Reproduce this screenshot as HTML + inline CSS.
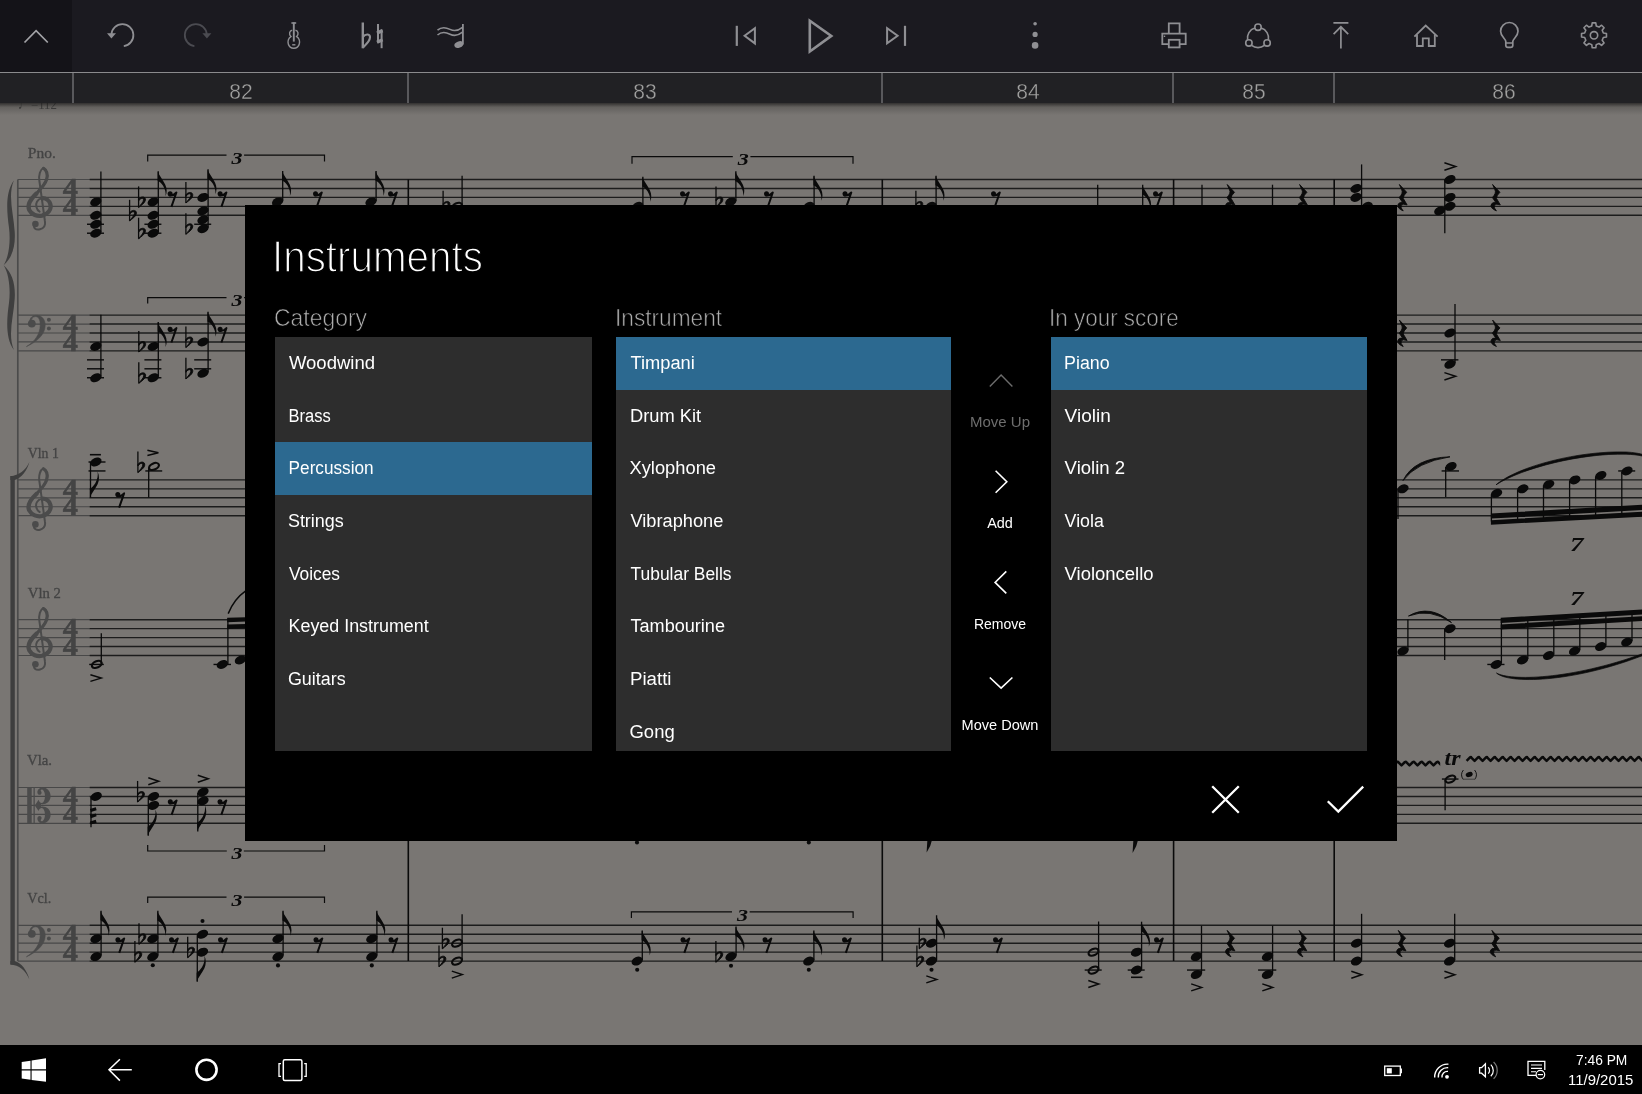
<!DOCTYPE html>
<html>
<head>
<meta charset="utf-8">
<title>Instruments</title>
<style>
html,body{margin:0;padding:0;background:#000;}
body{width:1642px;height:1094px;position:relative;overflow:hidden;font-family:"Liberation Sans",sans-serif;}
.abs{position:absolute;}
#paper{left:0;top:0;width:1642px;height:1046px;background:#797673;}
#toolbar{left:0;top:0;width:1642px;height:72px;background:#1b1a20;}
#tbleft{left:0;top:0;width:72px;height:72px;background:#141318;}
#ruler{left:0;top:72px;width:1642px;height:31px;background:#212124;}
#rulerline{left:0;top:72px;width:1642px;height:1px;background:#8b8b8d;}
#rulershadow{left:0;top:103px;width:1642px;height:12px;background:linear-gradient(rgba(30,29,28,.78),rgba(60,58,56,.35) 35%,rgba(121,118,115,0));}
.tick{position:absolute;top:73px;width:2px;height:30px;background:#59595c;}
.mnum{position:absolute;top:78.8px;width:60px;margin-left:-29.3px;text-align:center;color:#a0a0a2;font-size:22.6px;line-height:26px;transform:scaleX(.93);-webkit-text-stroke:0.35px #212124;}
#taskbar{left:0;top:1045.4px;width:1642px;height:48.6px;background:#000;}
#dialog{left:245px;top:205.3px;width:1152px;height:635.7px;background:#000;}
.list{position:absolute;top:337px;height:413.5px;background:#2d2d2d;overflow:hidden;}
.row{height:52.7px;line-height:52.7px;padding-left:14px;color:#fff;font-size:18px;white-space:nowrap;}
.row.sel{background:#2c6990;}
.row span,.lbl span,#title span,.t span{display:inline-block;transform-origin:0 50%;}
.lbl{position:absolute;color:#adadad;font-size:24px;line-height:30px;white-space:nowrap;-webkit-text-stroke:0.65px #000;}
#title{position:absolute;left:272px;top:228.5px;color:#fff;font-size:45px;line-height:56px;white-space:nowrap;-webkit-text-stroke:1.5px #000;}
#title span{transform:scaleX(0.897);}
.btnlbl{position:absolute;width:120px;margin-left:-60px;left:1000px;text-align:center;font-size:14px;line-height:18px;color:#fff;}
.row span,.lbl span,#title span,.t span,.btnlbl,.mnum,#score{filter:grayscale(1);}
</style>
</head>
<body>
<div id="paper" class="abs"></div>
<!-- SCORE -->
<svg id="score" class="abs" style="left:0;top:0" width="1642" height="1046" viewBox="0 0 1642 1046">
<path d="M17.8 179.5L90 179.5" stroke="#494846" stroke-width="1.2" fill="none" stroke-linecap="butt"/>
<path d="M89.7 179.5L1642 179.5" stroke="#1c1c1c" stroke-width="1.4" fill="none" stroke-linecap="butt"/>
<path d="M17.8 188.45L90 188.45" stroke="#494846" stroke-width="1.2" fill="none" stroke-linecap="butt"/>
<path d="M89.7 188.45L1642 188.45" stroke="#1c1c1c" stroke-width="1.4" fill="none" stroke-linecap="butt"/>
<path d="M17.8 197.4L90 197.4" stroke="#494846" stroke-width="1.2" fill="none" stroke-linecap="butt"/>
<path d="M89.7 197.4L1642 197.4" stroke="#1c1c1c" stroke-width="1.4" fill="none" stroke-linecap="butt"/>
<path d="M17.8 206.35L90 206.35" stroke="#494846" stroke-width="1.2" fill="none" stroke-linecap="butt"/>
<path d="M89.7 206.35L1642 206.35" stroke="#1c1c1c" stroke-width="1.4" fill="none" stroke-linecap="butt"/>
<path d="M17.8 215.3L90 215.3" stroke="#494846" stroke-width="1.2" fill="none" stroke-linecap="butt"/>
<path d="M89.7 215.3L1642 215.3" stroke="#1c1c1c" stroke-width="1.4" fill="none" stroke-linecap="butt"/>
<path d="M17.8 315.1L90 315.1" stroke="#494846" stroke-width="1.2" fill="none" stroke-linecap="butt"/>
<path d="M89.7 315.1L1642 315.1" stroke="#1c1c1c" stroke-width="1.4" fill="none" stroke-linecap="butt"/>
<path d="M17.8 324.05L90 324.05" stroke="#494846" stroke-width="1.2" fill="none" stroke-linecap="butt"/>
<path d="M89.7 324.05L1642 324.05" stroke="#1c1c1c" stroke-width="1.4" fill="none" stroke-linecap="butt"/>
<path d="M17.8 333L90 333" stroke="#494846" stroke-width="1.2" fill="none" stroke-linecap="butt"/>
<path d="M89.7 333L1642 333" stroke="#1c1c1c" stroke-width="1.4" fill="none" stroke-linecap="butt"/>
<path d="M17.8 341.95L90 341.95" stroke="#494846" stroke-width="1.2" fill="none" stroke-linecap="butt"/>
<path d="M89.7 341.95L1642 341.95" stroke="#1c1c1c" stroke-width="1.4" fill="none" stroke-linecap="butt"/>
<path d="M17.8 350.9L90 350.9" stroke="#494846" stroke-width="1.2" fill="none" stroke-linecap="butt"/>
<path d="M89.7 350.9L1642 350.9" stroke="#1c1c1c" stroke-width="1.4" fill="none" stroke-linecap="butt"/>
<path d="M17.8 479.9L90 479.9" stroke="#494846" stroke-width="1.2" fill="none" stroke-linecap="butt"/>
<path d="M89.7 479.9L1642 479.9" stroke="#1c1c1c" stroke-width="1.4" fill="none" stroke-linecap="butt"/>
<path d="M17.8 488.85L90 488.85" stroke="#494846" stroke-width="1.2" fill="none" stroke-linecap="butt"/>
<path d="M89.7 488.85L1642 488.85" stroke="#1c1c1c" stroke-width="1.4" fill="none" stroke-linecap="butt"/>
<path d="M17.8 497.8L90 497.8" stroke="#494846" stroke-width="1.2" fill="none" stroke-linecap="butt"/>
<path d="M89.7 497.8L1642 497.8" stroke="#1c1c1c" stroke-width="1.4" fill="none" stroke-linecap="butt"/>
<path d="M17.8 506.75L90 506.75" stroke="#494846" stroke-width="1.2" fill="none" stroke-linecap="butt"/>
<path d="M89.7 506.75L1642 506.75" stroke="#1c1c1c" stroke-width="1.4" fill="none" stroke-linecap="butt"/>
<path d="M17.8 515.7L90 515.7" stroke="#494846" stroke-width="1.2" fill="none" stroke-linecap="butt"/>
<path d="M89.7 515.7L1642 515.7" stroke="#1c1c1c" stroke-width="1.4" fill="none" stroke-linecap="butt"/>
<path d="M17.8 619.7L90 619.7" stroke="#494846" stroke-width="1.2" fill="none" stroke-linecap="butt"/>
<path d="M89.7 619.7L1642 619.7" stroke="#1c1c1c" stroke-width="1.4" fill="none" stroke-linecap="butt"/>
<path d="M17.8 628.65L90 628.65" stroke="#494846" stroke-width="1.2" fill="none" stroke-linecap="butt"/>
<path d="M89.7 628.65L1642 628.65" stroke="#1c1c1c" stroke-width="1.4" fill="none" stroke-linecap="butt"/>
<path d="M17.8 637.6L90 637.6" stroke="#494846" stroke-width="1.2" fill="none" stroke-linecap="butt"/>
<path d="M89.7 637.6L1642 637.6" stroke="#1c1c1c" stroke-width="1.4" fill="none" stroke-linecap="butt"/>
<path d="M17.8 646.55L90 646.55" stroke="#494846" stroke-width="1.2" fill="none" stroke-linecap="butt"/>
<path d="M89.7 646.55L1642 646.55" stroke="#1c1c1c" stroke-width="1.4" fill="none" stroke-linecap="butt"/>
<path d="M17.8 655.5L90 655.5" stroke="#494846" stroke-width="1.2" fill="none" stroke-linecap="butt"/>
<path d="M89.7 655.5L1642 655.5" stroke="#1c1c1c" stroke-width="1.4" fill="none" stroke-linecap="butt"/>
<path d="M17.8 787.5L90 787.5" stroke="#494846" stroke-width="1.2" fill="none" stroke-linecap="butt"/>
<path d="M89.7 787.5L1642 787.5" stroke="#1c1c1c" stroke-width="1.4" fill="none" stroke-linecap="butt"/>
<path d="M17.8 796.45L90 796.45" stroke="#494846" stroke-width="1.2" fill="none" stroke-linecap="butt"/>
<path d="M89.7 796.45L1642 796.45" stroke="#1c1c1c" stroke-width="1.4" fill="none" stroke-linecap="butt"/>
<path d="M17.8 805.4L90 805.4" stroke="#494846" stroke-width="1.2" fill="none" stroke-linecap="butt"/>
<path d="M89.7 805.4L1642 805.4" stroke="#1c1c1c" stroke-width="1.4" fill="none" stroke-linecap="butt"/>
<path d="M17.8 814.35L90 814.35" stroke="#494846" stroke-width="1.2" fill="none" stroke-linecap="butt"/>
<path d="M89.7 814.35L1642 814.35" stroke="#1c1c1c" stroke-width="1.4" fill="none" stroke-linecap="butt"/>
<path d="M17.8 823.3L90 823.3" stroke="#494846" stroke-width="1.2" fill="none" stroke-linecap="butt"/>
<path d="M89.7 823.3L1642 823.3" stroke="#1c1c1c" stroke-width="1.4" fill="none" stroke-linecap="butt"/>
<path d="M17.8 925.3L90 925.3" stroke="#494846" stroke-width="1.2" fill="none" stroke-linecap="butt"/>
<path d="M89.7 925.3L1642 925.3" stroke="#1c1c1c" stroke-width="1.4" fill="none" stroke-linecap="butt"/>
<path d="M17.8 934.25L90 934.25" stroke="#494846" stroke-width="1.2" fill="none" stroke-linecap="butt"/>
<path d="M89.7 934.25L1642 934.25" stroke="#1c1c1c" stroke-width="1.4" fill="none" stroke-linecap="butt"/>
<path d="M17.8 943.2L90 943.2" stroke="#494846" stroke-width="1.2" fill="none" stroke-linecap="butt"/>
<path d="M89.7 943.2L1642 943.2" stroke="#1c1c1c" stroke-width="1.4" fill="none" stroke-linecap="butt"/>
<path d="M17.8 952.15L90 952.15" stroke="#494846" stroke-width="1.2" fill="none" stroke-linecap="butt"/>
<path d="M89.7 952.15L1642 952.15" stroke="#1c1c1c" stroke-width="1.4" fill="none" stroke-linecap="butt"/>
<path d="M17.8 961.1L90 961.1" stroke="#494846" stroke-width="1.2" fill="none" stroke-linecap="butt"/>
<path d="M89.7 961.1L1642 961.1" stroke="#1c1c1c" stroke-width="1.4" fill="none" stroke-linecap="butt"/>
<path d="M17.8 179.5L17.8 961.1" stroke="#4c4b49" stroke-width="1.7" fill="none" stroke-linecap="butt"/>
<path d="M10.4 476 L14.8 476 L14.8 964.6 L10.4 964.6Z" fill="#3f3e3c"/>
<path d="M10.4 476.2 C19 475.4 25.5 470.6 29.4 462 C27 470.6 21.5 478 14.8 480 L10.4 480Z" fill="#3f3e3c"/>
<path d="M10.4 964.4 C19 965.2 25.5 970 29.4 979.4 C27 970.4 21.5 963 14.8 961 L10.4 961Z" fill="#3f3e3c"/>
<path d="M13.9 180.5 C5.5 191.7 6.5 209.7 9 227.7 C10.5 239.7 9.5 255.7 3.6 265.2 C12.5 257.7 15.6 245.7 14.7 231.7 C13.6 213.7 7.5 195.7 13.9 180.5Z M13.9 349.9 C5.5 338.7 6.5 320.7 9 302.7 C10.5 290.7 9.5 274.7 3.6 265.2 C12.5 272.7 15.6 284.7 14.7 298.7 C13.6 316.7 7.5 334.7 13.9 349.9Z" fill="#403f3d"/>
<text x="27.8" y="157.6" font-family="Liberation Serif, serif" font-size="15.5" fill="#454442" stroke="#454442" stroke-width="0.35" textLength="28" lengthAdjust="spacingAndGlyphs">Pno.</text>
<text x="27.8" y="457.8" font-family="Liberation Serif, serif" font-size="15.5" fill="#454442" stroke="#454442" stroke-width="0.35" textLength="31" lengthAdjust="spacingAndGlyphs">Vln 1</text>
<text x="27.8" y="597.6" font-family="Liberation Serif, serif" font-size="15.5" fill="#454442" stroke="#454442" stroke-width="0.35" textLength="33" lengthAdjust="spacingAndGlyphs">Vln 2</text>
<text x="27" y="765.3" font-family="Liberation Serif, serif" font-size="15.5" fill="#454442" stroke="#454442" stroke-width="0.35" textLength="25" lengthAdjust="spacingAndGlyphs">Vla.</text>
<text x="27.3" y="903.3" font-family="Liberation Serif, serif" font-size="15.5" fill="#454442" stroke="#454442" stroke-width="0.35" textLength="24" lengthAdjust="spacingAndGlyphs">Vcl.</text>
<text x="70.4" y="197.2" font-family="Liberation Serif, serif" font-weight="bold" font-size="26.5" fill="#454442" stroke="#454442" stroke-width="0.5" text-anchor="middle" transform="translate(70.4 0) scale(1.14 1) translate(-70.4 0)">4</text>
<text x="70.4" y="215.1" font-family="Liberation Serif, serif" font-weight="bold" font-size="26.5" fill="#454442" stroke="#454442" stroke-width="0.5" text-anchor="middle" transform="translate(70.4 0) scale(1.14 1) translate(-70.4 0)">4</text>
<text x="70.4" y="332.8" font-family="Liberation Serif, serif" font-weight="bold" font-size="26.5" fill="#454442" stroke="#454442" stroke-width="0.5" text-anchor="middle" transform="translate(70.4 0) scale(1.14 1) translate(-70.4 0)">4</text>
<text x="70.4" y="350.7" font-family="Liberation Serif, serif" font-weight="bold" font-size="26.5" fill="#454442" stroke="#454442" stroke-width="0.5" text-anchor="middle" transform="translate(70.4 0) scale(1.14 1) translate(-70.4 0)">4</text>
<text x="70.4" y="497.6" font-family="Liberation Serif, serif" font-weight="bold" font-size="26.5" fill="#454442" stroke="#454442" stroke-width="0.5" text-anchor="middle" transform="translate(70.4 0) scale(1.14 1) translate(-70.4 0)">4</text>
<text x="70.4" y="515.5" font-family="Liberation Serif, serif" font-weight="bold" font-size="26.5" fill="#454442" stroke="#454442" stroke-width="0.5" text-anchor="middle" transform="translate(70.4 0) scale(1.14 1) translate(-70.4 0)">4</text>
<text x="70.4" y="637.4" font-family="Liberation Serif, serif" font-weight="bold" font-size="26.5" fill="#454442" stroke="#454442" stroke-width="0.5" text-anchor="middle" transform="translate(70.4 0) scale(1.14 1) translate(-70.4 0)">4</text>
<text x="70.4" y="655.3" font-family="Liberation Serif, serif" font-weight="bold" font-size="26.5" fill="#454442" stroke="#454442" stroke-width="0.5" text-anchor="middle" transform="translate(70.4 0) scale(1.14 1) translate(-70.4 0)">4</text>
<text x="70.4" y="805.2" font-family="Liberation Serif, serif" font-weight="bold" font-size="26.5" fill="#454442" stroke="#454442" stroke-width="0.5" text-anchor="middle" transform="translate(70.4 0) scale(1.14 1) translate(-70.4 0)">4</text>
<text x="70.4" y="823.1" font-family="Liberation Serif, serif" font-weight="bold" font-size="26.5" fill="#454442" stroke="#454442" stroke-width="0.5" text-anchor="middle" transform="translate(70.4 0) scale(1.14 1) translate(-70.4 0)">4</text>
<text x="70.4" y="943" font-family="Liberation Serif, serif" font-weight="bold" font-size="26.5" fill="#454442" stroke="#454442" stroke-width="0.5" text-anchor="middle" transform="translate(70.4 0) scale(1.14 1) translate(-70.4 0)">4</text>
<text x="70.4" y="960.9" font-family="Liberation Serif, serif" font-weight="bold" font-size="26.5" fill="#454442" stroke="#454442" stroke-width="0.5" text-anchor="middle" transform="translate(70.4 0) scale(1.14 1) translate(-70.4 0)">4</text>
<g transform="translate(0 0)" fill="none" stroke="#4c4b49" stroke-linecap="round"><path d="M35.2 224.2 C32 227.6 36 230.4 40 229.3 C44.5 228 45.6 224.6 44.9 221 L39.4 181 C38.4 174.6 40.4 169.6 43.2 168 C46.2 169.4 48.4 174 46.6 179.6 C44.6 186 38 192 33.6 196.4 C29.4 200.6 27.2 205.4 29.4 210 C31.6 214.6 37.4 216.4 42 215.4 C48.4 214 51.4 209 50.2 204.6 C49 200 44.8 197.6 41.4 198.4 C37.4 199.4 35.2 203.4 36.4 207 C37 209.4 38.4 211 39.6 211.6" stroke-width="2"/><path d="M43.6 168.4 C46.2 169.8 48.4 174 46.6 179.6 C45.2 184 41.6 188 38.2 191.6" stroke-width="3.2"/><path d="M36.6 193.4 C31 198.6 26.8 204.6 29.2 210 C31.6 214.8 37.4 216.6 42 215.6 C48.6 214 51.6 209 50.4 204.4 C49.4 200.6 46 198.2 42.6 198.2" stroke-width="4.2"/><circle cx="35.4" cy="224" r="3.3" fill="#4c4b49" stroke="none"/></g>
<g transform="translate(0 0)"><path d="M31.5 324.2 C28.6 321.6 29.6 316.4 35.2 315.4 C41 314.6 45.4 319 45.2 325.6 C45 334.6 36.6 342 26.4 346.6 C35.6 341 40 333.6 40.2 325.4 C40.4 319.6 38.4 316.4 35.2 316.6 C32.6 316.8 31 319.2 31.5 321.4Z" fill="#4c4b49" stroke="#4c4b49" stroke-width="0.6"/><circle cx="31.8" cy="323.6" r="3.9" fill="#4c4b49"/><circle cx="48.9" cy="319.8" r="2" fill="#4c4b49"/><circle cx="48.9" cy="328.4" r="2" fill="#4c4b49"/></g>
<g transform="translate(0 300.4)" fill="none" stroke="#4c4b49" stroke-linecap="round"><path d="M35.2 224.2 C32 227.6 36 230.4 40 229.3 C44.5 228 45.6 224.6 44.9 221 L39.4 181 C38.4 174.6 40.4 169.6 43.2 168 C46.2 169.4 48.4 174 46.6 179.6 C44.6 186 38 192 33.6 196.4 C29.4 200.6 27.2 205.4 29.4 210 C31.6 214.6 37.4 216.4 42 215.4 C48.4 214 51.4 209 50.2 204.6 C49 200 44.8 197.6 41.4 198.4 C37.4 199.4 35.2 203.4 36.4 207 C37 209.4 38.4 211 39.6 211.6" stroke-width="2"/><path d="M43.6 168.4 C46.2 169.8 48.4 174 46.6 179.6 C45.2 184 41.6 188 38.2 191.6" stroke-width="3.2"/><path d="M36.6 193.4 C31 198.6 26.8 204.6 29.2 210 C31.6 214.8 37.4 216.6 42 215.6 C48.6 214 51.6 209 50.4 204.4 C49.4 200.6 46 198.2 42.6 198.2" stroke-width="4.2"/><circle cx="35.4" cy="224" r="3.3" fill="#4c4b49" stroke="none"/></g>
<g transform="translate(0 440.2)" fill="none" stroke="#4c4b49" stroke-linecap="round"><path d="M35.2 224.2 C32 227.6 36 230.4 40 229.3 C44.5 228 45.6 224.6 44.9 221 L39.4 181 C38.4 174.6 40.4 169.6 43.2 168 C46.2 169.4 48.4 174 46.6 179.6 C44.6 186 38 192 33.6 196.4 C29.4 200.6 27.2 205.4 29.4 210 C31.6 214.6 37.4 216.4 42 215.4 C48.4 214 51.4 209 50.2 204.6 C49 200 44.8 197.6 41.4 198.4 C37.4 199.4 35.2 203.4 36.4 207 C37 209.4 38.4 211 39.6 211.6" stroke-width="2"/><path d="M43.6 168.4 C46.2 169.8 48.4 174 46.6 179.6 C45.2 184 41.6 188 38.2 191.6" stroke-width="3.2"/><path d="M36.6 193.4 C31 198.6 26.8 204.6 29.2 210 C31.6 214.8 37.4 216.6 42 215.6 C48.6 214 51.6 209 50.4 204.4 C49.4 200.6 46 198.2 42.6 198.2" stroke-width="4.2"/><circle cx="35.4" cy="224" r="3.3" fill="#4c4b49" stroke="none"/></g>
<g fill="#4c4b49"><rect x="27.2" y="787.5" width="4.5" height="35.8"/><rect x="33.5" y="787.5" width="1.3" height="35.8"/><path d="M34.8 805.4 L38.6 799.8 C39.6 803.4 42 803.2 43 802.4 C45.6 800 45.8 792 42.6 789.8 C41.4 789 40.4 790 40.8 791 C42 791.8 42 794.8 39.6 794.8 C36.8 794.6 36.6 790.4 39.4 788.4 C43.6 785.8 50.6 789 50.6 796 C50.6 802.4 45 805 41 804 L41 806.8 C45 805.8 50.6 808.4 50.6 814.8 C50.6 821.8 43.6 825 39.4 822.4 C36.6 820.4 36.8 816.2 39.6 816 C42 816 42 819 40.8 819.8 C40.4 820.8 41.4 821.8 42.6 821 C45.8 818.8 45.6 810.8 43 808.4 C42 807.6 39.6 807.4 38.6 811Z"/></g>
<g transform="translate(0 610.2)"><path d="M31.5 324.2 C28.6 321.6 29.6 316.4 35.2 315.4 C41 314.6 45.4 319 45.2 325.6 C45 334.6 36.6 342 26.4 346.6 C35.6 341 40 333.6 40.2 325.4 C40.4 319.6 38.4 316.4 35.2 316.6 C32.6 316.8 31 319.2 31.5 321.4Z" fill="#4c4b49" stroke="#4c4b49" stroke-width="0.6"/><circle cx="31.8" cy="323.6" r="3.9" fill="#4c4b49"/><circle cx="48.9" cy="319.8" r="2" fill="#4c4b49"/><circle cx="48.9" cy="328.4" r="2" fill="#4c4b49"/></g>
<text x="18" y="108.6" font-family="Liberation Serif, serif" font-size="15.5" fill="#3c3b39" textLength="39" lengthAdjust="spacingAndGlyphs">&#9833;=112</text>
<path d="M408.3 179.5L408.3 350.9" stroke="#0a0a0a" stroke-width="1.6" fill="none" stroke-linecap="butt"/>
<path d="M408.3 479.9L408.3 961.1" stroke="#0a0a0a" stroke-width="1.6" fill="none" stroke-linecap="butt"/>
<path d="M882.3 179.5L882.3 350.9" stroke="#0a0a0a" stroke-width="1.6" fill="none" stroke-linecap="butt"/>
<path d="M882.3 479.9L882.3 961.1" stroke="#0a0a0a" stroke-width="1.6" fill="none" stroke-linecap="butt"/>
<path d="M1173.6 179.5L1173.6 350.9" stroke="#0a0a0a" stroke-width="1.6" fill="none" stroke-linecap="butt"/>
<path d="M1173.6 479.9L1173.6 961.1" stroke="#0a0a0a" stroke-width="1.6" fill="none" stroke-linecap="butt"/>
<path d="M1334.2 179.5L1334.2 350.9" stroke="#0a0a0a" stroke-width="1.6" fill="none" stroke-linecap="butt"/>
<path d="M1334.2 479.9L1334.2 961.1" stroke="#0a0a0a" stroke-width="1.6" fill="none" stroke-linecap="butt"/>
<path d="M87 224.25L104 224.25" stroke="#0a0a0a" stroke-width="1.4" fill="none" stroke-linecap="butt"/>
<path d="M87 233.2L104 233.2" stroke="#0a0a0a" stroke-width="1.4" fill="none" stroke-linecap="butt"/>
<path d="M100.9 232.2L100.9 171.5" stroke="#0a0a0a" stroke-width="1.3" fill="none" stroke-linecap="butt"/>
<ellipse cx="95.8" cy="201.88" rx="5.9" ry="4.15" transform="rotate(-24 95.8 201.88)" fill="#0a0a0a"/>
<ellipse cx="95.8" cy="215.3" rx="5.9" ry="4.15" transform="rotate(-24 95.8 215.3)" fill="#0a0a0a"/>
<ellipse cx="95.8" cy="224.25" rx="5.9" ry="4.15" transform="rotate(-24 95.8 224.25)" fill="#0a0a0a"/>
<ellipse cx="95.8" cy="233.2" rx="5.9" ry="4.15" transform="rotate(-24 95.8 233.2)" fill="#0a0a0a"/>
<path d="M144.4 224.25L161.4 224.25" stroke="#0a0a0a" stroke-width="1.4" fill="none" stroke-linecap="butt"/>
<path d="M144.4 233.2L161.4 233.2" stroke="#0a0a0a" stroke-width="1.4" fill="none" stroke-linecap="butt"/>
<path d="M158.3 232.2L158.3 171.2" stroke="#0a0a0a" stroke-width="1.3" fill="none" stroke-linecap="butt"/>
<ellipse cx="153.2" cy="201.88" rx="5.9" ry="4.15" transform="rotate(-24 153.2 201.88)" fill="#0a0a0a"/>
<ellipse cx="153.2" cy="215.3" rx="5.9" ry="4.15" transform="rotate(-24 153.2 215.3)" fill="#0a0a0a"/>
<ellipse cx="153.2" cy="224.25" rx="5.9" ry="4.15" transform="rotate(-24 153.2 224.25)" fill="#0a0a0a"/>
<ellipse cx="153.2" cy="233.2" rx="5.9" ry="4.15" transform="rotate(-24 153.2 233.2)" fill="#0a0a0a"/>
<path d="M157.65 171.2 C159.1 175.2 163.1 180.2 165.3 184.7 C167.1 188.7 167.2 192.7 165.5 196.2 C166 192.7 165.2 189.5 163.1 185.8 C161.5 183.2 159.3 181.5 157.65 180.8Z" fill="#0a0a0a"/>
<path d="M129.6 199.8L129.6 220.9" stroke="#0a0a0a" stroke-width="1.3" fill="none" stroke-linecap="butt"/>
<path d="M129.6 212.7 C132.2 209.1 137.2 209.9 136.4 213.7 C135.6 216.9 132.2 218.7 129.6 220.9 C131.6 217.9 134.4 215.7 134.5 213.3 C134.6 210.9 131.6 211.1 129.6 214.3Z" fill="#0a0a0a" stroke="#0a0a0a" stroke-width="0.9"/>
<path d="M138.6 186.38L138.6 207.47" stroke="#0a0a0a" stroke-width="1.3" fill="none" stroke-linecap="butt"/>
<path d="M138.6 199.28 C141.2 195.68 146.2 196.47 145.4 200.28 C144.6 203.47 141.2 205.28 138.6 207.47 C140.6 204.47 143.4 202.28 143.5 199.88 C143.6 197.47 140.6 197.68 138.6 200.88Z" fill="#0a0a0a" stroke="#0a0a0a" stroke-width="0.9"/>
<path d="M138.6 217.7L138.6 238.8" stroke="#0a0a0a" stroke-width="1.3" fill="none" stroke-linecap="butt"/>
<path d="M138.6 230.6 C141.2 227 146.2 227.8 145.4 231.6 C144.6 234.8 141.2 236.6 138.6 238.8 C140.6 235.8 143.4 233.6 143.5 231.2 C143.6 228.8 140.6 229 138.6 232.2Z" fill="#0a0a0a" stroke="#0a0a0a" stroke-width="0.9"/>
<circle cx="170.1" cy="193.7" r="2.5" fill="#0a0a0a"/>
<path d="M168.9 195.3 Q173.1 196.3 176.4 192.5 L171.4 206.9" stroke="#0a0a0a" stroke-width="2" fill="none" stroke-linejoin="round"/>
<path d="M194.2 224.25L211.2 224.25" stroke="#0a0a0a" stroke-width="1.4" fill="none" stroke-linecap="butt"/>
<path d="M208.1 227.72L208.1 169.2" stroke="#0a0a0a" stroke-width="1.3" fill="none" stroke-linecap="butt"/>
<ellipse cx="203" cy="197.4" rx="5.9" ry="4.15" transform="rotate(-24 203 197.4)" fill="#0a0a0a"/>
<ellipse cx="203" cy="210.82" rx="5.9" ry="4.15" transform="rotate(-24 203 210.82)" fill="#0a0a0a"/>
<ellipse cx="203" cy="219.78" rx="5.9" ry="4.15" transform="rotate(-24 203 219.78)" fill="#0a0a0a"/>
<ellipse cx="203" cy="228.72" rx="5.9" ry="4.15" transform="rotate(-24 203 228.72)" fill="#0a0a0a"/>
<path d="M207.45 169.2 C208.9 173.2 212.9 178.2 215.1 182.7 C216.9 186.7 217 190.7 215.3 194.2 C215.8 190.7 215 187.5 212.9 183.8 C211.3 181.2 209.1 179.5 207.45 178.8Z" fill="#0a0a0a"/>
<path d="M185.9 181.9L185.9 203" stroke="#0a0a0a" stroke-width="1.3" fill="none" stroke-linecap="butt"/>
<path d="M185.9 194.8 C188.5 191.2 193.5 192 192.7 195.8 C191.9 199 188.5 200.8 185.9 203 C187.9 200 190.7 197.8 190.8 195.4 C190.9 193 187.9 193.2 185.9 196.4Z" fill="#0a0a0a" stroke="#0a0a0a" stroke-width="0.9"/>
<path d="M185.9 213.22L185.9 234.32" stroke="#0a0a0a" stroke-width="1.3" fill="none" stroke-linecap="butt"/>
<path d="M185.9 226.12 C188.5 222.53 193.5 223.32 192.7 227.12 C191.9 230.32 188.5 232.12 185.9 234.32 C187.9 231.32 190.7 229.12 190.8 226.72 C190.9 224.32 187.9 224.53 185.9 227.72Z" fill="#0a0a0a" stroke="#0a0a0a" stroke-width="0.9"/>
<circle cx="220.1" cy="193.7" r="2.5" fill="#0a0a0a"/>
<path d="M218.9 195.3 Q223.1 196.3 226.4 192.5 L221.4 206.9" stroke="#0a0a0a" stroke-width="2" fill="none" stroke-linejoin="round"/>
<path d="M282.7 200.88L282.7 171" stroke="#0a0a0a" stroke-width="1.3" fill="none" stroke-linecap="butt"/>
<ellipse cx="277.6" cy="201.88" rx="5.9" ry="4.15" transform="rotate(-24 277.6 201.88)" fill="#0a0a0a"/>
<path d="M282.05 171 C283.5 175 287.5 180 289.7 184.5 C291.5 188.5 291.6 192.5 289.9 196 C290.4 192.5 289.6 189.3 287.5 185.6 C285.9 183 283.7 181.3 282.05 180.6Z" fill="#0a0a0a"/>
<circle cx="315.5" cy="193.7" r="2.5" fill="#0a0a0a"/>
<path d="M314.3 195.3 Q318.5 196.3 321.8 192.5 L316.8 206.9" stroke="#0a0a0a" stroke-width="2" fill="none" stroke-linejoin="round"/>
<path d="M376.1 200.88L376.1 171" stroke="#0a0a0a" stroke-width="1.3" fill="none" stroke-linecap="butt"/>
<ellipse cx="371" cy="201.88" rx="5.9" ry="4.15" transform="rotate(-24 371 201.88)" fill="#0a0a0a"/>
<path d="M375.45 171 C376.9 175 380.9 180 383.1 184.5 C384.9 188.5 385 192.5 383.3 196 C383.8 192.5 383 189.3 380.9 185.6 C379.3 183 377.1 181.3 375.45 180.6Z" fill="#0a0a0a"/>
<circle cx="390.5" cy="193.7" r="2.5" fill="#0a0a0a"/>
<path d="M389.3 195.3 Q393.5 196.3 396.8 192.5 L391.8 206.9" stroke="#0a0a0a" stroke-width="2" fill="none" stroke-linejoin="round"/>
<path d="M147.7 161.6L147.7 155.1L226.5 155.1M244.1 155.1L324.5 155.1L324.5 161.6" stroke="#0a0a0a" stroke-width="1.2" fill="none"/>
<text x="0" y="0" transform="translate(236.9 163.7) scale(1.3 1)" font-family="Liberation Serif, serif" font-weight="bold" font-style="italic" font-size="17" fill="#0a0a0a" text-anchor="middle">3</text>
<path d="M443.1 190.85L443.1 211.95" stroke="#0a0a0a" stroke-width="1.3" fill="none" stroke-linecap="butt"/>
<path d="M443.1 203.75 C445.7 200.15 450.7 200.95 449.9 204.75 C449.1 207.95 445.7 209.75 443.1 211.95 C445.1 208.95 447.9 206.75 448 204.35 C448.1 201.95 445.1 202.15 443.1 205.35Z" fill="#0a0a0a" stroke="#0a0a0a" stroke-width="0.9"/>
<path d="M462.1 205.35L462.1 175.7" stroke="#0a0a0a" stroke-width="1.3" fill="none" stroke-linecap="butt"/>
<ellipse cx="457" cy="206.35" rx="5.2" ry="3.1" transform="rotate(-24 457 206.35)" fill="none" stroke="#0a0a0a" stroke-width="2.2"/>
<path d="M632 163.7L632 156.7L732.8 156.7M750.4 156.7L853 156.7L853 163.7" stroke="#0a0a0a" stroke-width="1.2" fill="none"/>
<text x="0" y="0" transform="translate(743.2 165.3) scale(1.3 1)" font-family="Liberation Serif, serif" font-weight="bold" font-style="italic" font-size="17" fill="#0a0a0a" text-anchor="middle">3</text>
<path d="M642.9 205.35L642.9 176.8" stroke="#0a0a0a" stroke-width="1.3" fill="none" stroke-linecap="butt"/>
<ellipse cx="637.8" cy="206.35" rx="5.9" ry="4.15" transform="rotate(-24 637.8 206.35)" fill="#0a0a0a"/>
<path d="M642.25 176.8 C643.7 180.8 647.7 185.8 649.9 190.3 C651.7 194.3 651.8 198.3 650.1 201.8 C650.6 198.3 649.8 195.1 647.7 191.4 C646.1 188.8 643.9 187.1 642.25 186.4Z" fill="#0a0a0a"/>
<circle cx="682.5" cy="193.7" r="2.5" fill="#0a0a0a"/>
<path d="M681.3 195.3 Q685.5 196.3 688.8 192.5 L683.8 206.9" stroke="#0a0a0a" stroke-width="2" fill="none" stroke-linejoin="round"/>
<path d="M716 186.38L716 207.47" stroke="#0a0a0a" stroke-width="1.3" fill="none" stroke-linecap="butt"/>
<path d="M716 199.28 C718.6 195.68 723.6 196.47 722.8 200.28 C722 203.47 718.6 205.28 716 207.47 C718 204.47 720.8 202.28 720.9 199.88 C721 197.47 718 197.68 716 200.88Z" fill="#0a0a0a" stroke="#0a0a0a" stroke-width="0.9"/>
<path d="M735.9 200.88L735.9 171.3" stroke="#0a0a0a" stroke-width="1.3" fill="none" stroke-linecap="butt"/>
<ellipse cx="730.8" cy="201.88" rx="5.9" ry="4.15" transform="rotate(-24 730.8 201.88)" fill="#0a0a0a"/>
<path d="M735.25 171.3 C736.7 175.3 740.7 180.3 742.9 184.8 C744.7 188.8 744.8 192.8 743.1 196.3 C743.6 192.8 742.8 189.6 740.7 185.9 C739.1 183.3 736.9 181.6 735.25 180.9Z" fill="#0a0a0a"/>
<circle cx="766.5" cy="193.7" r="2.5" fill="#0a0a0a"/>
<path d="M765.3 195.3 Q769.5 196.3 772.8 192.5 L767.8 206.9" stroke="#0a0a0a" stroke-width="2" fill="none" stroke-linejoin="round"/>
<path d="M814.1 205.35L814.1 175.7" stroke="#0a0a0a" stroke-width="1.3" fill="none" stroke-linecap="butt"/>
<ellipse cx="809" cy="206.35" rx="5.9" ry="4.15" transform="rotate(-24 809 206.35)" fill="#0a0a0a"/>
<path d="M813.45 175.7 C814.9 179.7 818.9 184.7 821.1 189.2 C822.9 193.2 823 197.2 821.3 200.7 C821.8 197.2 821 194 818.9 190.3 C817.3 187.7 815.1 186 813.45 185.3Z" fill="#0a0a0a"/>
<circle cx="845" cy="193.7" r="2.5" fill="#0a0a0a"/>
<path d="M843.8 195.3 Q848 196.3 851.3 192.5 L846.3 206.9" stroke="#0a0a0a" stroke-width="2" fill="none" stroke-linejoin="round"/>
<path d="M915.9 190.85L915.9 211.95" stroke="#0a0a0a" stroke-width="1.3" fill="none" stroke-linecap="butt"/>
<path d="M915.9 203.75 C918.5 200.15 923.5 200.95 922.7 204.75 C921.9 207.95 918.5 209.75 915.9 211.95 C917.9 208.95 920.7 206.75 920.8 204.35 C920.9 201.95 917.9 202.15 915.9 205.35Z" fill="#0a0a0a" stroke="#0a0a0a" stroke-width="0.9"/>
<path d="M936.1 205.35L936.1 175.7" stroke="#0a0a0a" stroke-width="1.3" fill="none" stroke-linecap="butt"/>
<ellipse cx="931" cy="206.35" rx="5.9" ry="4.15" transform="rotate(-24 931 206.35)" fill="#0a0a0a"/>
<path d="M935.45 175.7 C936.9 179.7 940.9 184.7 943.1 189.2 C944.9 193.2 945 197.2 943.3 200.7 C943.8 197.2 943 194 940.9 190.3 C939.3 187.7 937.1 186 935.45 185.3Z" fill="#0a0a0a"/>
<circle cx="993.5" cy="193.7" r="2.5" fill="#0a0a0a"/>
<path d="M992.3 195.3 Q996.5 196.3 999.8 192.5 L994.8 206.9" stroke="#0a0a0a" stroke-width="2" fill="none" stroke-linejoin="round"/>
<path d="M1097.7 184.7L1097.7 216" stroke="#0a0a0a" stroke-width="1.3" fill="none" stroke-linecap="butt"/>
<path d="M1142.7 184.7L1142.7 216" stroke="#0a0a0a" stroke-width="1.3" fill="none" stroke-linecap="butt"/>
<path d="M1142.05 184.7 C1143.5 188.7 1147.5 193.7 1149.7 198.2 C1151.5 202.2 1151.6 206.2 1149.9 209.7 C1150.4 206.2 1149.6 203 1147.5 199.3 C1145.9 196.7 1143.7 195 1142.05 194.3Z" fill="#0a0a0a"/>
<circle cx="1155.5" cy="193.7" r="2.5" fill="#0a0a0a"/>
<path d="M1154.3 195.3 Q1158.5 196.3 1161.8 192.5 L1156.8 206.9" stroke="#0a0a0a" stroke-width="2" fill="none" stroke-linejoin="round"/>
<path d="M1202 184.7L1202 216" stroke="#0a0a0a" stroke-width="1.3" fill="none" stroke-linecap="butt"/>
<path d="M-3.4 -13.2 L3.9 -5.4 Q0.6 -2.4 0.4 0.6 L4.3 7.2 Q0 5.6 -1.6 7.6 Q-2.6 10 0.4 13.2 Q-5.6 10.6 -5 7.4 Q-4.2 4.2 -0.2 4.8 L-3.6 -0.2 Q0.8 -4.6 -1.2 -8.2Z" transform="translate(1230.6 197.7)" fill="#0a0a0a" stroke="#0a0a0a" stroke-width="0.9" stroke-linejoin="round"/>
<path d="M1272.5 184.7L1272.5 216" stroke="#0a0a0a" stroke-width="1.3" fill="none" stroke-linecap="butt"/>
<path d="M-3.4 -13.2 L3.9 -5.4 Q0.6 -2.4 0.4 0.6 L4.3 7.2 Q0 5.6 -1.6 7.6 Q-2.6 10 0.4 13.2 Q-5.6 10.6 -5 7.4 Q-4.2 4.2 -0.2 4.8 L-3.6 -0.2 Q0.8 -4.6 -1.2 -8.2Z" transform="translate(1303 197.7)" fill="#0a0a0a" stroke="#0a0a0a" stroke-width="0.9" stroke-linejoin="round"/>
<path d="M1361.6 164.4L1361.6 216" stroke="#0a0a0a" stroke-width="1.3" fill="none" stroke-linecap="butt"/>
<ellipse cx="1356" cy="188.45" rx="5.9" ry="4.15" transform="rotate(-24 1356 188.45)" fill="#0a0a0a"/>
<ellipse cx="1356" cy="197.4" rx="5.9" ry="4.15" transform="rotate(-24 1356 197.4)" fill="#0a0a0a"/>
<ellipse cx="1367.2" cy="206.35" rx="5.9" ry="4.15" transform="rotate(-24 1367.2 206.35)" fill="#0a0a0a"/>
<path d="M-3.4 -13.2 L3.9 -5.4 Q0.6 -2.4 0.4 0.6 L4.3 7.2 Q0 5.6 -1.6 7.6 Q-2.6 10 0.4 13.2 Q-5.6 10.6 -5 7.4 Q-4.2 4.2 -0.2 4.8 L-3.6 -0.2 Q0.8 -4.6 -1.2 -8.2Z" transform="translate(1402.8 197.7)" fill="#0a0a0a" stroke="#0a0a0a" stroke-width="0.9" stroke-linejoin="round"/>
<path d="M1444.8 179.5L1444.8 233.2" stroke="#0a0a0a" stroke-width="1.3" fill="none" stroke-linecap="butt"/>
<ellipse cx="1449.9" cy="179.5" rx="5.9" ry="4.15" transform="rotate(-24 1449.9 179.5)" fill="#0a0a0a"/>
<ellipse cx="1449.9" cy="197.4" rx="5.9" ry="4.15" transform="rotate(-24 1449.9 197.4)" fill="#0a0a0a"/>
<ellipse cx="1449.9" cy="206.35" rx="5.9" ry="4.15" transform="rotate(-24 1449.9 206.35)" fill="#0a0a0a"/>
<ellipse cx="1439.8" cy="210.82" rx="5.9" ry="4.15" transform="rotate(-24 1439.8 210.82)" fill="#0a0a0a"/>
<path d="M1444.4 162.8L1455.6 166.5L1444.4 170.2" stroke="#0a0a0a" stroke-width="1.5" fill="none"/>
<path d="M-3.4 -13.2 L3.9 -5.4 Q0.6 -2.4 0.4 0.6 L4.3 7.2 Q0 5.6 -1.6 7.6 Q-2.6 10 0.4 13.2 Q-5.6 10.6 -5 7.4 Q-4.2 4.2 -0.2 4.8 L-3.6 -0.2 Q0.8 -4.6 -1.2 -8.2Z" transform="translate(1496 197.7)" fill="#0a0a0a" stroke="#0a0a0a" stroke-width="0.9" stroke-linejoin="round"/>
<path d="M87 359.85L104 359.85" stroke="#0a0a0a" stroke-width="1.4" fill="none" stroke-linecap="butt"/>
<path d="M87 368.8L104 368.8" stroke="#0a0a0a" stroke-width="1.4" fill="none" stroke-linecap="butt"/>
<path d="M87 377.75L104 377.75" stroke="#0a0a0a" stroke-width="1.4" fill="none" stroke-linecap="butt"/>
<path d="M100.9 376.75L100.9 314.8" stroke="#0a0a0a" stroke-width="1.3" fill="none" stroke-linecap="butt"/>
<ellipse cx="95.8" cy="346.43" rx="5.9" ry="4.15" transform="rotate(-24 95.8 346.43)" fill="#0a0a0a"/>
<ellipse cx="95.8" cy="377.75" rx="5.9" ry="4.15" transform="rotate(-24 95.8 377.75)" fill="#0a0a0a"/>
<path d="M144.4 359.85L161.4 359.85" stroke="#0a0a0a" stroke-width="1.4" fill="none" stroke-linecap="butt"/>
<path d="M144.4 368.8L161.4 368.8" stroke="#0a0a0a" stroke-width="1.4" fill="none" stroke-linecap="butt"/>
<path d="M144.4 377.75L161.4 377.75" stroke="#0a0a0a" stroke-width="1.4" fill="none" stroke-linecap="butt"/>
<path d="M158.3 376.75L158.3 322" stroke="#0a0a0a" stroke-width="1.3" fill="none" stroke-linecap="butt"/>
<ellipse cx="153.2" cy="346.43" rx="5.9" ry="4.15" transform="rotate(-24 153.2 346.43)" fill="#0a0a0a"/>
<ellipse cx="153.2" cy="377.75" rx="5.9" ry="4.15" transform="rotate(-24 153.2 377.75)" fill="#0a0a0a"/>
<path d="M157.65 322 C159.1 326 163.1 331 165.3 335.5 C167.1 339.5 167.2 343.5 165.5 347 C166 343.5 165.2 340.3 163.1 336.6 C161.5 334 159.3 332.3 157.65 331.6Z" fill="#0a0a0a"/>
<path d="M138.8 330.93L138.8 352.03" stroke="#0a0a0a" stroke-width="1.3" fill="none" stroke-linecap="butt"/>
<path d="M138.8 343.82 C141.4 340.23 146.4 341.03 145.6 344.82 C144.8 348.03 141.4 349.82 138.8 352.03 C140.8 349.03 143.6 346.82 143.7 344.43 C143.8 342.03 140.8 342.23 138.8 345.43Z" fill="#0a0a0a" stroke="#0a0a0a" stroke-width="0.9"/>
<path d="M138.8 362.25L138.8 383.35" stroke="#0a0a0a" stroke-width="1.3" fill="none" stroke-linecap="butt"/>
<path d="M138.8 375.15 C141.4 371.55 146.4 372.35 145.6 376.15 C144.8 379.35 141.4 381.15 138.8 383.35 C140.8 380.35 143.6 378.15 143.7 375.75 C143.8 373.35 140.8 373.55 138.8 376.75Z" fill="#0a0a0a" stroke="#0a0a0a" stroke-width="0.9"/>
<circle cx="170.1" cy="329.3" r="2.5" fill="#0a0a0a"/>
<path d="M168.9 330.9 Q173.1 331.9 176.4 328.1 L171.4 342.5" stroke="#0a0a0a" stroke-width="2" fill="none" stroke-linejoin="round"/>
<path d="M194.2 359.85L211.2 359.85" stroke="#0a0a0a" stroke-width="1.4" fill="none" stroke-linecap="butt"/>
<path d="M194.2 368.8L211.2 368.8" stroke="#0a0a0a" stroke-width="1.4" fill="none" stroke-linecap="butt"/>
<path d="M208.1 372.28L208.1 311.8" stroke="#0a0a0a" stroke-width="1.3" fill="none" stroke-linecap="butt"/>
<ellipse cx="203" cy="341.95" rx="5.9" ry="4.15" transform="rotate(-24 203 341.95)" fill="#0a0a0a"/>
<ellipse cx="203" cy="373.28" rx="5.9" ry="4.15" transform="rotate(-24 203 373.28)" fill="#0a0a0a"/>
<path d="M207.45 311.8 C208.9 315.8 212.9 320.8 215.1 325.3 C216.9 329.3 217 333.3 215.3 336.8 C215.8 333.3 215 330.1 212.9 326.4 C211.3 323.8 209.1 322.1 207.45 321.4Z" fill="#0a0a0a"/>
<path d="M185.9 326.45L185.9 347.55" stroke="#0a0a0a" stroke-width="1.3" fill="none" stroke-linecap="butt"/>
<path d="M185.9 339.35 C188.5 335.75 193.5 336.55 192.7 340.35 C191.9 343.55 188.5 345.35 185.9 347.55 C187.9 344.55 190.7 342.35 190.8 339.95 C190.9 337.55 187.9 337.75 185.9 340.95Z" fill="#0a0a0a" stroke="#0a0a0a" stroke-width="0.9"/>
<path d="M185.9 357.78L185.9 378.88" stroke="#0a0a0a" stroke-width="1.3" fill="none" stroke-linecap="butt"/>
<path d="M185.9 370.68 C188.5 367.08 193.5 367.88 192.7 371.68 C191.9 374.88 188.5 376.68 185.9 378.88 C187.9 375.88 190.7 373.68 190.8 371.28 C190.9 368.88 187.9 369.08 185.9 372.28Z" fill="#0a0a0a" stroke="#0a0a0a" stroke-width="0.9"/>
<circle cx="220.1" cy="329.3" r="2.5" fill="#0a0a0a"/>
<path d="M218.9 330.9 Q223.1 331.9 226.4 328.1 L221.4 342.5" stroke="#0a0a0a" stroke-width="2" fill="none" stroke-linejoin="round"/>
<path d="M147.7 303.6L147.7 297.6L226.5 297.6M244.1 297.6L324.5 297.6L324.5 303.6" stroke="#0a0a0a" stroke-width="1.2" fill="none"/>
<text x="0" y="0" transform="translate(236.9 306.2) scale(1.3 1)" font-family="Liberation Serif, serif" font-weight="bold" font-style="italic" font-size="17" fill="#0a0a0a" text-anchor="middle">3</text>
<path d="M-3.4 -13.2 L3.9 -5.4 Q0.6 -2.4 0.4 0.6 L4.3 7.2 Q0 5.6 -1.6 7.6 Q-2.6 10 0.4 13.2 Q-5.6 10.6 -5 7.4 Q-4.2 4.2 -0.2 4.8 L-3.6 -0.2 Q0.8 -4.6 -1.2 -8.2Z" transform="translate(1402.8 333.3)" fill="#0a0a0a" stroke="#0a0a0a" stroke-width="0.9" stroke-linejoin="round"/>
<path d="M1441 359.85L1458.4 359.85" stroke="#0a0a0a" stroke-width="1.4" fill="none" stroke-linecap="butt"/>
<path d="M1455 304L1455 363" stroke="#0a0a0a" stroke-width="1.3" fill="none" stroke-linecap="butt"/>
<ellipse cx="1450" cy="333" rx="5.9" ry="4.15" transform="rotate(-24 1450 333)" fill="#0a0a0a"/>
<ellipse cx="1450" cy="364.33" rx="5.9" ry="4.15" transform="rotate(-24 1450 364.33)" fill="#0a0a0a"/>
<path d="M1444.4 372.6L1455.6 376.3L1444.4 380" stroke="#0a0a0a" stroke-width="1.5" fill="none"/>
<path d="M-3.4 -13.2 L3.9 -5.4 Q0.6 -2.4 0.4 0.6 L4.3 7.2 Q0 5.6 -1.6 7.6 Q-2.6 10 0.4 13.2 Q-5.6 10.6 -5 7.4 Q-4.2 4.2 -0.2 4.8 L-3.6 -0.2 Q0.8 -4.6 -1.2 -8.2Z" transform="translate(1496 333.3)" fill="#0a0a0a" stroke="#0a0a0a" stroke-width="0.9" stroke-linejoin="round"/>
<path d="M88.5 470.95L105.5 470.95" stroke="#0a0a0a" stroke-width="1.4" fill="none" stroke-linecap="butt"/>
<path d="M88.5 462L105.5 462" stroke="#0a0a0a" stroke-width="1.4" fill="none" stroke-linecap="butt"/>
<path d="M89.9 454.7L100.9 454.7" stroke="#0a0a0a" stroke-width="1.6" fill="none" stroke-linecap="butt"/>
<path d="M90.5 462L90.5 497.5" stroke="#0a0a0a" stroke-width="1.3" fill="none" stroke-linecap="butt"/>
<ellipse cx="95.9" cy="462" rx="5.9" ry="4.15" transform="rotate(-24 95.9 462)" fill="#0a0a0a"/>
<path d="M89.85 497.8 C91.3 493.8 95.3 488.8 97.6 484.3 C99.4 480.3 99.5 475.8 97.6 471.5 C98.2 475.8 97.4 479.3 95.3 483.2 C93.7 485.8 91.5 487.8 89.85 488.8Z" fill="#0a0a0a"/>
<circle cx="117.8" cy="494.5" r="2.5" fill="#0a0a0a"/>
<path d="M116.6 496.1 Q120.8 497.1 124.1 493.3 L119.1 507.7" stroke="#0a0a0a" stroke-width="2" fill="none" stroke-linejoin="round"/>
<path d="M137.9 451.5L137.9 472.6" stroke="#0a0a0a" stroke-width="1.3" fill="none" stroke-linecap="butt"/>
<path d="M137.9 464.4 C140.5 460.8 145.5 461.6 144.7 465.4 C143.9 468.6 140.5 470.4 137.9 472.6 C139.9 469.6 142.7 467.4 142.8 465 C142.9 462.6 139.9 462.8 137.9 466Z" fill="#0a0a0a" stroke="#0a0a0a" stroke-width="0.9"/>
<path d="M145.3 470.95L162.2 470.95" stroke="#0a0a0a" stroke-width="1.4" fill="none" stroke-linecap="butt"/>
<path d="M148.7 468L148.7 497.5" stroke="#0a0a0a" stroke-width="1.3" fill="none" stroke-linecap="butt"/>
<ellipse cx="154" cy="466.47" rx="5.2" ry="3.1" transform="rotate(-24 154 466.47)" fill="none" stroke="#0a0a0a" stroke-width="2.2"/>
<path d="M147.4 450.2L158.4 452.8L147.4 455.4" stroke="#0a0a0a" stroke-width="1.5" fill="none"/>
<path d="M1398 489L1398 519" stroke="#0a0a0a" stroke-width="1.3" fill="none" stroke-linecap="butt"/>
<ellipse cx="1403" cy="488.85" rx="5.9" ry="4.15" transform="rotate(-24 1403 488.85)" fill="#0a0a0a"/>
<path d="M1403 480.6 Q1414 458 1450 456.8 Q1416.5 462 1403 480.6Z" fill="#0a0a0a" stroke="#0a0a0a" stroke-width="0.9"/>
<path d="M1441.6 470.95L1459 470.95" stroke="#0a0a0a" stroke-width="1.4" fill="none" stroke-linecap="butt"/>
<path d="M1445.7 467L1445.7 497" stroke="#0a0a0a" stroke-width="1.3" fill="none" stroke-linecap="butt"/>
<ellipse cx="1451" cy="466.47" rx="5.9" ry="4.15" transform="rotate(-24 1451 466.47)" fill="#0a0a0a"/>
<path d="M1491.4 494.32L1491.4 521.49" stroke="#0a0a0a" stroke-width="1.3" fill="none" stroke-linecap="butt"/>
<ellipse cx="1496.6" cy="493.32" rx="5.9" ry="4.15" transform="rotate(-24 1496.6 493.32)" fill="#0a0a0a"/>
<path d="M1517.6 489.85L1517.6 519.96" stroke="#0a0a0a" stroke-width="1.3" fill="none" stroke-linecap="butt"/>
<ellipse cx="1522.8" cy="488.85" rx="5.9" ry="4.15" transform="rotate(-24 1522.8 488.85)" fill="#0a0a0a"/>
<path d="M1543.5 485.38L1543.5 518.45" stroke="#0a0a0a" stroke-width="1.3" fill="none" stroke-linecap="butt"/>
<ellipse cx="1548.7" cy="484.38" rx="5.9" ry="4.15" transform="rotate(-24 1548.7 484.38)" fill="#0a0a0a"/>
<path d="M1569.6 480.9L1569.6 516.93" stroke="#0a0a0a" stroke-width="1.3" fill="none" stroke-linecap="butt"/>
<ellipse cx="1574.8" cy="479.9" rx="5.9" ry="4.15" transform="rotate(-24 1574.8 479.9)" fill="#0a0a0a"/>
<path d="M1595.6 476.42L1595.6 515.41" stroke="#0a0a0a" stroke-width="1.3" fill="none" stroke-linecap="butt"/>
<ellipse cx="1600.8" cy="475.42" rx="5.9" ry="4.15" transform="rotate(-24 1600.8 475.42)" fill="#0a0a0a"/>
<path d="M1621.8 471.95L1621.8 513.88" stroke="#0a0a0a" stroke-width="1.3" fill="none" stroke-linecap="butt"/>
<path d="M1618.2 470.95L1635.2 470.95" stroke="#0a0a0a" stroke-width="1.4" fill="none" stroke-linecap="butt"/>
<ellipse cx="1627" cy="470.95" rx="5.9" ry="4.15" transform="rotate(-24 1627 470.95)" fill="#0a0a0a"/>
<path d="M1490.9 513.5 L1642 504.7 L1642 510.1 L1490.9 518.6Z M1490.9 520.2 L1642 511.8 L1642 516.8 L1490.9 524.7Z" fill="#0a0a0a"/>
<path d="M1496 484.8 C1518 466 1580 450.5 1626 452 C1634 452.4 1640 453.6 1643 454.6 L1643 456.2 C1638 455 1632 454.4 1626 454.2 C1582 453 1522 468 1496 484.8Z" fill="#0a0a0a" stroke="#0a0a0a" stroke-width="0.7"/>
<text x="0" y="0" transform="translate(1576.8 551.3) scale(1.5 1)" font-family="Liberation Serif, serif" font-weight="bold" font-style="italic" font-size="18" fill="#0a0a0a" text-anchor="middle">7</text>
<path d="M89.2 664.45L103.8 664.45" stroke="#0a0a0a" stroke-width="1.4" fill="none" stroke-linecap="butt"/>
<path d="M101.3 664L101.3 633.2" stroke="#0a0a0a" stroke-width="1.3" fill="none" stroke-linecap="butt"/>
<ellipse cx="96.8" cy="664.45" rx="5.2" ry="3.1" transform="rotate(-24 96.8 664.45)" fill="none" stroke="#0a0a0a" stroke-width="2.2"/>
<path d="M90.4 674.8L101.2 678.1L90.4 681.4" stroke="#0a0a0a" stroke-width="1.5" fill="none"/>
<path d="M213.5 664.45L231 664.45" stroke="#0a0a0a" stroke-width="1.4" fill="none" stroke-linecap="butt"/>
<path d="M227.9 664L227.9 618.5" stroke="#0a0a0a" stroke-width="1.3" fill="none" stroke-linecap="butt"/>
<ellipse cx="222.3" cy="664.45" rx="5.9" ry="4.15" transform="rotate(-24 222.3 664.45)" fill="#0a0a0a"/>
<ellipse cx="240.4" cy="659.98" rx="5.9" ry="4.15" transform="rotate(-24 240.4 659.98)" fill="#0a0a0a"/>
<path d="M227.2 617.8 L246 617.2 L246 621.6 L227.2 622.2Z M227.2 624.5 L246 623.9 L246 628.3 L227.2 628.9Z" fill="#0a0a0a"/>
<path d="M228.2 613.6 Q234 599 246 590.6" stroke="#0a0a0a" stroke-width="1.5" fill="none"/>
<path d="M1407.9 650L1407.9 619.6" stroke="#0a0a0a" stroke-width="1.3" fill="none" stroke-linecap="butt"/>
<ellipse cx="1403" cy="651.03" rx="5.9" ry="4.15" transform="rotate(-24 1403 651.03)" fill="#0a0a0a"/>
<path d="M1408.5 616 Q1430 603.6 1451.5 622.6 Q1430 607.6 1408.5 616Z" fill="#0a0a0a" stroke="#0a0a0a" stroke-width="0.9"/>
<path d="M1444.7 629L1444.7 660" stroke="#0a0a0a" stroke-width="1.3" fill="none" stroke-linecap="butt"/>
<ellipse cx="1450" cy="628.65" rx="5.9" ry="4.15" transform="rotate(-24 1450 628.65)" fill="#0a0a0a"/>
<path d="M1487.3 664.45L1504.5 664.45" stroke="#0a0a0a" stroke-width="1.4" fill="none" stroke-linecap="butt"/>
<path d="M1501.4 663.45L1501.4 618.78" stroke="#0a0a0a" stroke-width="1.3" fill="none" stroke-linecap="butt"/>
<ellipse cx="1496.2" cy="664.45" rx="5.9" ry="4.15" transform="rotate(-24 1496.2 664.45)" fill="#0a0a0a"/>
<path d="M1527.8 658.98L1527.8 617.2" stroke="#0a0a0a" stroke-width="1.3" fill="none" stroke-linecap="butt"/>
<ellipse cx="1522.6" cy="659.98" rx="5.9" ry="4.15" transform="rotate(-24 1522.6 659.98)" fill="#0a0a0a"/>
<path d="M1553.8 654.5L1553.8 615.65" stroke="#0a0a0a" stroke-width="1.3" fill="none" stroke-linecap="butt"/>
<ellipse cx="1548.6" cy="655.5" rx="5.9" ry="4.15" transform="rotate(-24 1548.6 655.5)" fill="#0a0a0a"/>
<path d="M1579.8 650.03L1579.8 614.11" stroke="#0a0a0a" stroke-width="1.3" fill="none" stroke-linecap="butt"/>
<ellipse cx="1574.6" cy="651.03" rx="5.9" ry="4.15" transform="rotate(-24 1574.6 651.03)" fill="#0a0a0a"/>
<path d="M1605.9 645.55L1605.9 612.55" stroke="#0a0a0a" stroke-width="1.3" fill="none" stroke-linecap="butt"/>
<ellipse cx="1600.7" cy="646.55" rx="5.9" ry="4.15" transform="rotate(-24 1600.7 646.55)" fill="#0a0a0a"/>
<path d="M1632 641.08L1632 611" stroke="#0a0a0a" stroke-width="1.3" fill="none" stroke-linecap="butt"/>
<ellipse cx="1626.8" cy="642.08" rx="5.9" ry="4.15" transform="rotate(-24 1626.8 642.08)" fill="#0a0a0a"/>
<path d="M1500.7 617.8 L1642 609.4 L1642 614.6 L1500.7 622.9Z M1500.7 624.4 L1642 616.2 L1642 621.1 L1500.7 629.4Z" fill="#0a0a0a"/>
<path d="M1496.5 673 C1510 681 1570 680 1643 653.6 L1643 655.4 C1572 683 1508 684 1496.5 673Z" fill="#0a0a0a" stroke="#0a0a0a" stroke-width="0.7"/>
<text x="0" y="0" transform="translate(1576.8 604.7) scale(1.5 1)" font-family="Liberation Serif, serif" font-weight="bold" font-style="italic" font-size="18" fill="#0a0a0a" text-anchor="middle">7</text>
<path d="M91 797L91 827.2" stroke="#0a0a0a" stroke-width="1.3" fill="none" stroke-linecap="butt"/>
<ellipse cx="96.2" cy="796.45" rx="5.9" ry="4.15" transform="rotate(-24 96.2 796.45)" fill="#0a0a0a"/>
<path d="M90.4 810.5L96.2 808.7" stroke="#0a0a0a" stroke-width="3" fill="none"/>
<path d="M90.4 816.7L96.2 814.9" stroke="#0a0a0a" stroke-width="3" fill="none"/>
<path d="M90.4 823L96.2 821.2" stroke="#0a0a0a" stroke-width="3" fill="none"/>
<path d="M137.6 780.95L137.6 802.05" stroke="#0a0a0a" stroke-width="1.3" fill="none" stroke-linecap="butt"/>
<path d="M137.6 793.85 C140.2 790.25 145.2 791.05 144.4 794.85 C143.6 798.05 140.2 799.85 137.6 802.05 C139.6 799.05 142.4 796.85 142.5 794.45 C142.6 792.05 139.6 792.25 137.6 795.45Z" fill="#0a0a0a" stroke="#0a0a0a" stroke-width="0.9"/>
<path d="M148.3 797.45L148.3 835.7" stroke="#0a0a0a" stroke-width="1.3" fill="none" stroke-linecap="butt"/>
<ellipse cx="153.5" cy="796.45" rx="5.9" ry="4.15" transform="rotate(-24 153.5 796.45)" fill="#0a0a0a"/>
<ellipse cx="153.5" cy="805.4" rx="5.9" ry="4.15" transform="rotate(-24 153.5 805.4)" fill="#0a0a0a"/>
<path d="M147.65 835.7 C149.1 831.7 153.1 826.7 155.4 822.2 C157.2 818.2 157.3 813.7 155.4 809.4 C156 813.7 155.2 817.2 153.1 821.1 C151.5 823.7 149.3 825.7 147.65 826.7Z" fill="#0a0a0a"/>
<path d="M148.3 777.7L158.7 781.2L148.3 784.7" stroke="#0a0a0a" stroke-width="1.5" fill="none"/>
<circle cx="170.3" cy="801.7" r="2.5" fill="#0a0a0a"/>
<path d="M169.1 803.3 Q173.3 804.3 176.6 800.5 L171.6 814.9" stroke="#0a0a0a" stroke-width="2" fill="none" stroke-linejoin="round"/>
<path d="M197.8 792.98L197.8 831.6" stroke="#0a0a0a" stroke-width="1.3" fill="none" stroke-linecap="butt"/>
<ellipse cx="203" cy="791.98" rx="5.9" ry="4.15" transform="rotate(-24 203 791.98)" fill="#0a0a0a"/>
<ellipse cx="203" cy="800.92" rx="5.9" ry="4.15" transform="rotate(-24 203 800.92)" fill="#0a0a0a"/>
<path d="M197.15 831.6 C198.6 827.6 202.6 822.6 204.9 818.1 C206.7 814.1 206.8 809.6 204.9 805.3 C205.5 809.6 204.7 813.1 202.6 817 C201 819.6 198.8 821.6 197.15 822.6Z" fill="#0a0a0a"/>
<path d="M197.8 775.3L208.2 778.8L197.8 782.3" stroke="#0a0a0a" stroke-width="1.5" fill="none"/>
<circle cx="220" cy="801.7" r="2.5" fill="#0a0a0a"/>
<path d="M218.8 803.3 Q223 804.3 226.3 800.5 L221.3 814.9" stroke="#0a0a0a" stroke-width="2" fill="none" stroke-linejoin="round"/>
<path d="M147.7 845 L147.7 851 L226.8 851 M243.8 851 L324.5 851 L324.5 845" stroke="#0a0a0a" stroke-width="1.2" fill="none"/>
<text x="0" y="0" transform="translate(236.9 859.4) scale(1.3 1)" font-family="Liberation Serif, serif" font-weight="bold" font-style="italic" font-size="17" fill="#0a0a0a" text-anchor="middle">3</text>
<circle cx="637" cy="842.4" r="2.05" fill="#0a0a0a"/>
<circle cx="808.8" cy="842.4" r="2.05" fill="#0a0a0a"/>
<path d="M926.6 852.6 L927.4 840 L932 840 Q931 846 926.6 852.6Z" fill="#0a0a0a"/>
<path d="M1132.6 853 L1133.4 840 L1138 840 Q1137 846.4 1132.6 853Z" fill="#0a0a0a"/>
<clipPath id="wc"><rect x="1397" y="750" width="43.2" height="30"/></clipPath>
<g clip-path="url(#wc)">
<path d="M1393.5 765.4 l3.4 -3.4 q1 -0.6 1.6 0.4 l3 3 l3.4 -3.4 q1 -0.6 1.6 0.4 l3 3 l3.4 -3.4 q1 -0.6 1.6 0.4 l3 3 l3.4 -3.4 q1 -0.6 1.6 0.4 l3 3 l3.4 -3.4 q1 -0.6 1.6 0.4 l3 3 l3.4 -3.4 q1 -0.6 1.6 0.4 l3 3" stroke="#0a0a0a" stroke-width="2.5" fill="none" stroke-linejoin="round"/>
</g>
<path d="M1466.6 760.8 l3.4 -3.4 q1 -0.6 1.6 0.4 l3 3 l3.4 -3.4 q1 -0.6 1.6 0.4 l3 3 l3.4 -3.4 q1 -0.6 1.6 0.4 l3 3 l3.4 -3.4 q1 -0.6 1.6 0.4 l3 3 l3.4 -3.4 q1 -0.6 1.6 0.4 l3 3 l3.4 -3.4 q1 -0.6 1.6 0.4 l3 3 l3.4 -3.4 q1 -0.6 1.6 0.4 l3 3 l3.4 -3.4 q1 -0.6 1.6 0.4 l3 3 l3.4 -3.4 q1 -0.6 1.6 0.4 l3 3 l3.4 -3.4 q1 -0.6 1.6 0.4 l3 3 l3.4 -3.4 q1 -0.6 1.6 0.4 l3 3 l3.4 -3.4 q1 -0.6 1.6 0.4 l3 3 l3.4 -3.4 q1 -0.6 1.6 0.4 l3 3 l3.4 -3.4 q1 -0.6 1.6 0.4 l3 3 l3.4 -3.4 q1 -0.6 1.6 0.4 l3 3 l3.4 -3.4 q1 -0.6 1.6 0.4 l3 3 l3.4 -3.4 q1 -0.6 1.6 0.4 l3 3 l3.4 -3.4 q1 -0.6 1.6 0.4 l3 3 l3.4 -3.4 q1 -0.6 1.6 0.4 l3 3 l3.4 -3.4 q1 -0.6 1.6 0.4 l3 3 l3.4 -3.4 q1 -0.6 1.6 0.4 l3 3 l3.4 -3.4 q1 -0.6 1.6 0.4 l3 3 l3.4 -3.4 q1 -0.6 1.6 0.4 l3 3" stroke="#0a0a0a" stroke-width="2.5" fill="none" stroke-linejoin="round"/>
<text x="0" y="0" transform="translate(1444.6 765.4) scale(1.2 1)" font-family="Liberation Serif, serif" font-weight="bold" font-style="italic" font-size="20" fill="#0a0a0a">tr</text>
<path d="M1441.9 779.05L1458.5 779.05" stroke="#0a0a0a" stroke-width="1.4" fill="none" stroke-linecap="butt"/>
<path d="M1445.1 780L1445.1 810.2" stroke="#0a0a0a" stroke-width="1.3" fill="none" stroke-linecap="butt"/>
<ellipse cx="1450.4" cy="779.05" rx="5.2" ry="3.1" transform="rotate(-24 1450.4 779.05)" fill="none" stroke="#0a0a0a" stroke-width="2.2"/>
<path d="M1463.4 770 Q1459.6 774.8 1463.4 779.6 M1474.6 770 Q1478.4 774.8 1474.6 779.6" stroke="#0a0a0a" stroke-width="0.9" fill="none"/>
<path d="M1463.8 779.2 L1474 779.2" stroke="#3a3a3a" stroke-width="0.9" fill="none"/>
<ellipse cx="1469.2" cy="774.5" rx="3.6" ry="2.5" transform="rotate(-22 1469.2 774.5)" fill="#0a0a0a"/>
<path d="M101.1 955.62L101.1 910.7" stroke="#0a0a0a" stroke-width="1.3" fill="none" stroke-linecap="butt"/>
<ellipse cx="96" cy="938.72" rx="5.9" ry="4.15" transform="rotate(-24 96 938.72)" fill="#0a0a0a"/>
<ellipse cx="96" cy="956.62" rx="5.9" ry="4.15" transform="rotate(-24 96 956.62)" fill="#0a0a0a"/>
<path d="M100.45 910.7 C101.9 914.7 105.9 919.7 108.1 924.2 C109.9 928.2 110 932.2 108.3 935.7 C108.8 932.2 108 929 105.9 925.3 C104.3 922.7 102.1 921 100.45 920.3Z" fill="#0a0a0a"/>
<circle cx="117.9" cy="939.7" r="2.5" fill="#0a0a0a"/>
<path d="M116.7 941.3 Q120.9 942.3 124.2 938.5 L119.2 952.9" stroke="#0a0a0a" stroke-width="2" fill="none" stroke-linejoin="round"/>
<path d="M139 923.22L139 944.32" stroke="#0a0a0a" stroke-width="1.3" fill="none" stroke-linecap="butt"/>
<path d="M139 936.12 C141.6 932.52 146.6 933.32 145.8 937.12 C145 940.32 141.6 942.12 139 944.32 C141 941.32 143.8 939.12 143.9 936.72 C144 934.32 141 934.52 139 937.72Z" fill="#0a0a0a" stroke="#0a0a0a" stroke-width="0.9"/>
<path d="M134.9 941.12L134.9 962.23" stroke="#0a0a0a" stroke-width="1.3" fill="none" stroke-linecap="butt"/>
<path d="M134.9 954.02 C137.5 950.42 142.5 951.23 141.7 955.02 C140.9 958.23 137.5 960.02 134.9 962.23 C136.9 959.23 139.7 957.02 139.8 954.62 C139.9 952.23 136.9 952.42 134.9 955.62Z" fill="#0a0a0a" stroke="#0a0a0a" stroke-width="0.9"/>
<path d="M157.9 955.62L157.9 910.8" stroke="#0a0a0a" stroke-width="1.3" fill="none" stroke-linecap="butt"/>
<ellipse cx="152.8" cy="938.72" rx="5.9" ry="4.15" transform="rotate(-24 152.8 938.72)" fill="#0a0a0a"/>
<ellipse cx="152.8" cy="956.62" rx="5.9" ry="4.15" transform="rotate(-24 152.8 956.62)" fill="#0a0a0a"/>
<path d="M157.25 910.8 C158.7 914.8 162.7 919.8 164.9 924.3 C166.7 928.3 166.8 932.3 165.1 935.8 C165.6 932.3 164.8 929.1 162.7 925.4 C161.1 922.8 158.9 921.1 157.25 920.4Z" fill="#0a0a0a"/>
<circle cx="152.8" cy="965.3" r="2.05" fill="#0a0a0a"/>
<circle cx="171.5" cy="939.7" r="2.5" fill="#0a0a0a"/>
<path d="M170.3 941.3 Q174.5 942.3 177.8 938.5 L172.8 952.9" stroke="#0a0a0a" stroke-width="2" fill="none" stroke-linejoin="round"/>
<path d="M187.7 936.65L187.7 957.75" stroke="#0a0a0a" stroke-width="1.3" fill="none" stroke-linecap="butt"/>
<path d="M187.7 949.55 C190.3 945.95 195.3 946.75 194.5 950.55 C193.7 953.75 190.3 955.55 187.7 957.75 C189.7 954.75 192.5 952.55 192.6 950.15 C192.7 947.75 189.7 947.95 187.7 951.15Z" fill="#0a0a0a" stroke="#0a0a0a" stroke-width="0.9"/>
<path d="M197.3 935.25L197.3 981.7" stroke="#0a0a0a" stroke-width="1.3" fill="none" stroke-linecap="butt"/>
<ellipse cx="202.5" cy="934.25" rx="5.9" ry="4.15" transform="rotate(-24 202.5 934.25)" fill="#0a0a0a"/>
<ellipse cx="202.5" cy="952.15" rx="5.9" ry="4.15" transform="rotate(-24 202.5 952.15)" fill="#0a0a0a"/>
<path d="M196.65 981.7 C198.1 977.7 202.1 972.7 204.4 968.2 C206.2 964.2 206.3 959.7 204.4 955.4 C205 959.7 204.2 963.2 202.1 967.1 C200.5 969.7 198.3 971.7 196.65 972.7Z" fill="#0a0a0a"/>
<circle cx="202.5" cy="921" r="2.05" fill="#0a0a0a"/>
<circle cx="220.5" cy="939.7" r="2.5" fill="#0a0a0a"/>
<path d="M219.3 941.3 Q223.5 942.3 226.8 938.5 L221.8 952.9" stroke="#0a0a0a" stroke-width="2" fill="none" stroke-linejoin="round"/>
<path d="M283.1 955.62L283.1 910.8" stroke="#0a0a0a" stroke-width="1.3" fill="none" stroke-linecap="butt"/>
<ellipse cx="278" cy="938.72" rx="5.9" ry="4.15" transform="rotate(-24 278 938.72)" fill="#0a0a0a"/>
<ellipse cx="278" cy="956.62" rx="5.9" ry="4.15" transform="rotate(-24 278 956.62)" fill="#0a0a0a"/>
<path d="M282.45 910.8 C283.9 914.8 287.9 919.8 290.1 924.3 C291.9 928.3 292 932.3 290.3 935.8 C290.8 932.3 290 929.1 287.9 925.4 C286.3 922.8 284.1 921.1 282.45 920.4Z" fill="#0a0a0a"/>
<circle cx="278" cy="965.4" r="2.05" fill="#0a0a0a"/>
<circle cx="316" cy="939.7" r="2.5" fill="#0a0a0a"/>
<path d="M314.8 941.3 Q319 942.3 322.3 938.5 L317.3 952.9" stroke="#0a0a0a" stroke-width="2" fill="none" stroke-linejoin="round"/>
<path d="M376.9 955.62L376.9 910.8" stroke="#0a0a0a" stroke-width="1.3" fill="none" stroke-linecap="butt"/>
<ellipse cx="371.8" cy="938.72" rx="5.9" ry="4.15" transform="rotate(-24 371.8 938.72)" fill="#0a0a0a"/>
<ellipse cx="371.8" cy="956.62" rx="5.9" ry="4.15" transform="rotate(-24 371.8 956.62)" fill="#0a0a0a"/>
<path d="M376.25 910.8 C377.7 914.8 381.7 919.8 383.9 924.3 C385.7 928.3 385.8 932.3 384.1 935.8 C384.6 932.3 383.8 929.1 381.7 925.4 C380.1 922.8 377.9 921.1 376.25 920.4Z" fill="#0a0a0a"/>
<circle cx="371.8" cy="965.4" r="2.05" fill="#0a0a0a"/>
<circle cx="391" cy="939.7" r="2.5" fill="#0a0a0a"/>
<path d="M389.8 941.3 Q394 942.3 397.3 938.5 L392.3 952.9" stroke="#0a0a0a" stroke-width="2" fill="none" stroke-linejoin="round"/>
<path d="M147.7 903.1L147.7 897.1L226.5 897.1M244.1 897.1L324.5 897.1L324.5 903.1" stroke="#0a0a0a" stroke-width="1.2" fill="none"/>
<text x="0" y="0" transform="translate(236.9 905.7) scale(1.3 1)" font-family="Liberation Serif, serif" font-weight="bold" font-style="italic" font-size="17" fill="#0a0a0a" text-anchor="middle">3</text>
<path d="M442.4 927.7L442.4 948.8" stroke="#0a0a0a" stroke-width="1.3" fill="none" stroke-linecap="butt"/>
<path d="M442.4 940.6 C445 937 450 937.8 449.2 941.6 C448.4 944.8 445 946.6 442.4 948.8 C444.4 945.8 447.2 943.6 447.3 941.2 C447.4 938.8 444.4 939 442.4 942.2Z" fill="#0a0a0a" stroke="#0a0a0a" stroke-width="0.9"/>
<path d="M439 945.6L439 966.7" stroke="#0a0a0a" stroke-width="1.3" fill="none" stroke-linecap="butt"/>
<path d="M439 958.5 C441.6 954.9 446.6 955.7 445.8 959.5 C445 962.7 441.6 964.5 439 966.7 C441 963.7 443.8 961.5 443.9 959.1 C444 956.7 441 956.9 439 960.1Z" fill="#0a0a0a" stroke="#0a0a0a" stroke-width="0.9"/>
<path d="M462.1 960.1L462.1 914.2" stroke="#0a0a0a" stroke-width="1.3" fill="none" stroke-linecap="butt"/>
<ellipse cx="457" cy="943.2" rx="5.2" ry="3.1" transform="rotate(-24 457 943.2)" fill="none" stroke="#0a0a0a" stroke-width="2.2"/>
<ellipse cx="457" cy="961.1" rx="5.2" ry="3.1" transform="rotate(-24 457 961.1)" fill="none" stroke="#0a0a0a" stroke-width="2.2"/>
<path d="M451.8 971.1L462.2 974.6L451.8 978.1" stroke="#0a0a0a" stroke-width="1.5" fill="none"/>
<path d="M631.4 917.9L631.4 911.9L732 911.9M749.6 911.9L853.1 911.9L853.1 917.9" stroke="#0a0a0a" stroke-width="1.2" fill="none"/>
<text x="0" y="0" transform="translate(742.4 920.5) scale(1.3 1)" font-family="Liberation Serif, serif" font-weight="bold" font-style="italic" font-size="17" fill="#0a0a0a" text-anchor="middle">3</text>
<path d="M642.3 960.1L642.3 930.6" stroke="#0a0a0a" stroke-width="1.3" fill="none" stroke-linecap="butt"/>
<ellipse cx="637.2" cy="961.1" rx="5.9" ry="4.15" transform="rotate(-24 637.2 961.1)" fill="#0a0a0a"/>
<path d="M641.65 930.6 C643.1 934.6 647.1 939.6 649.3 944.1 C651.1 948.1 651.2 952.1 649.5 955.6 C650 952.1 649.2 948.9 647.1 945.2 C645.5 942.6 643.3 940.9 641.65 940.2Z" fill="#0a0a0a"/>
<circle cx="637.2" cy="969.8" r="2.05" fill="#0a0a0a"/>
<circle cx="683" cy="939.7" r="2.5" fill="#0a0a0a"/>
<path d="M681.8 941.3 Q686 942.3 689.3 938.5 L684.3 952.9" stroke="#0a0a0a" stroke-width="2" fill="none" stroke-linejoin="round"/>
<path d="M715.9 941.12L715.9 962.23" stroke="#0a0a0a" stroke-width="1.3" fill="none" stroke-linecap="butt"/>
<path d="M715.9 954.02 C718.5 950.42 723.5 951.23 722.7 955.02 C721.9 958.23 718.5 960.02 715.9 962.23 C717.9 959.23 720.7 957.02 720.8 954.62 C720.9 952.23 717.9 952.42 715.9 955.62Z" fill="#0a0a0a" stroke="#0a0a0a" stroke-width="0.9"/>
<path d="M736.1 955.62L736.1 926.5" stroke="#0a0a0a" stroke-width="1.3" fill="none" stroke-linecap="butt"/>
<ellipse cx="731" cy="956.62" rx="5.9" ry="4.15" transform="rotate(-24 731 956.62)" fill="#0a0a0a"/>
<path d="M735.45 926.5 C736.9 930.5 740.9 935.5 743.1 940 C744.9 944 745 948 743.3 951.5 C743.8 948 743 944.8 740.9 941.1 C739.3 938.5 737.1 936.8 735.45 936.1Z" fill="#0a0a0a"/>
<circle cx="731" cy="965.7" r="2.05" fill="#0a0a0a"/>
<circle cx="765" cy="939.7" r="2.5" fill="#0a0a0a"/>
<path d="M763.8 941.3 Q768 942.3 771.3 938.5 L766.3 952.9" stroke="#0a0a0a" stroke-width="2" fill="none" stroke-linejoin="round"/>
<path d="M813.9 960.1L813.9 930.6" stroke="#0a0a0a" stroke-width="1.3" fill="none" stroke-linecap="butt"/>
<ellipse cx="808.8" cy="961.1" rx="5.9" ry="4.15" transform="rotate(-24 808.8 961.1)" fill="#0a0a0a"/>
<path d="M813.25 930.6 C814.7 934.6 818.7 939.6 820.9 944.1 C822.7 948.1 822.8 952.1 821.1 955.6 C821.6 952.1 820.8 948.9 818.7 945.2 C817.1 942.6 814.9 940.9 813.25 940.2Z" fill="#0a0a0a"/>
<circle cx="808.8" cy="969.8" r="2.05" fill="#0a0a0a"/>
<circle cx="844.5" cy="939.7" r="2.5" fill="#0a0a0a"/>
<path d="M843.3 941.3 Q847.5 942.3 850.8 938.5 L845.8 952.9" stroke="#0a0a0a" stroke-width="2" fill="none" stroke-linejoin="round"/>
<path d="M919.3 927.7L919.3 948.8" stroke="#0a0a0a" stroke-width="1.3" fill="none" stroke-linecap="butt"/>
<path d="M919.3 940.6 C921.9 937 926.9 937.8 926.1 941.6 C925.3 944.8 921.9 946.6 919.3 948.8 C921.3 945.8 924.1 943.6 924.2 941.2 C924.3 938.8 921.3 939 919.3 942.2Z" fill="#0a0a0a" stroke="#0a0a0a" stroke-width="0.9"/>
<path d="M916.9 945.6L916.9 966.7" stroke="#0a0a0a" stroke-width="1.3" fill="none" stroke-linecap="butt"/>
<path d="M916.9 958.5 C919.5 954.9 924.5 955.7 923.7 959.5 C922.9 962.7 919.5 964.5 916.9 966.7 C918.9 963.7 921.7 961.5 921.8 959.1 C921.9 956.7 918.9 956.9 916.9 960.1Z" fill="#0a0a0a" stroke="#0a0a0a" stroke-width="0.9"/>
<path d="M936.6 960.1L936.6 915.3" stroke="#0a0a0a" stroke-width="1.3" fill="none" stroke-linecap="butt"/>
<ellipse cx="931.5" cy="943.2" rx="5.9" ry="4.15" transform="rotate(-24 931.5 943.2)" fill="#0a0a0a"/>
<ellipse cx="931.5" cy="961.1" rx="5.9" ry="4.15" transform="rotate(-24 931.5 961.1)" fill="#0a0a0a"/>
<path d="M935.95 915.3 C937.4 919.3 941.4 924.3 943.6 928.8 C945.4 932.8 945.5 936.8 943.8 940.3 C944.3 936.8 943.5 933.6 941.4 929.9 C939.8 927.3 937.6 925.6 935.95 924.9Z" fill="#0a0a0a"/>
<circle cx="931.5" cy="969.8" r="2.05" fill="#0a0a0a"/>
<path d="M926.3 975.9L936.7 979.4L926.3 982.9" stroke="#0a0a0a" stroke-width="1.5" fill="none"/>
<circle cx="995.5" cy="939.7" r="2.5" fill="#0a0a0a"/>
<path d="M994.3 941.3 Q998.5 942.3 1001.8 938.5 L996.8 952.9" stroke="#0a0a0a" stroke-width="2" fill="none" stroke-linejoin="round"/>
<path d="M1084.7 970.05L1101.7 970.05" stroke="#0a0a0a" stroke-width="1.4" fill="none" stroke-linecap="butt"/>
<path d="M1098.6 969.05L1098.6 921.5" stroke="#0a0a0a" stroke-width="1.3" fill="none" stroke-linecap="butt"/>
<ellipse cx="1093.5" cy="952.15" rx="5.2" ry="3.1" transform="rotate(-24 1093.5 952.15)" fill="none" stroke="#0a0a0a" stroke-width="2.2"/>
<ellipse cx="1093.5" cy="970.05" rx="5.2" ry="3.1" transform="rotate(-24 1093.5 970.05)" fill="none" stroke="#0a0a0a" stroke-width="2.2"/>
<path d="M1088.3 980.5L1098.7 984L1088.3 987.5" stroke="#0a0a0a" stroke-width="1.5" fill="none"/>
<path d="M1127.7 970.05L1144.7 970.05" stroke="#0a0a0a" stroke-width="1.4" fill="none" stroke-linecap="butt"/>
<path d="M1141.6 969.05L1141.6 921.7" stroke="#0a0a0a" stroke-width="1.3" fill="none" stroke-linecap="butt"/>
<ellipse cx="1136.5" cy="952.15" rx="5.9" ry="4.15" transform="rotate(-24 1136.5 952.15)" fill="#0a0a0a"/>
<ellipse cx="1136.5" cy="970.05" rx="5.9" ry="4.15" transform="rotate(-24 1136.5 970.05)" fill="#0a0a0a"/>
<path d="M1140.95 921.7 C1142.4 925.7 1146.4 930.7 1148.6 935.2 C1150.4 939.2 1150.5 943.2 1148.8 946.7 C1149.3 943.2 1148.5 940 1146.4 936.3 C1144.8 933.7 1142.6 932 1140.95 931.3Z" fill="#0a0a0a"/>
<path d="M1131 977.3L1142.4 977.3" stroke="#0a0a0a" stroke-width="1.6" fill="none" stroke-linecap="butt"/>
<circle cx="1156.5" cy="939.7" r="2.5" fill="#0a0a0a"/>
<path d="M1155.3 941.3 Q1159.5 942.3 1162.8 938.5 L1157.8 952.9" stroke="#0a0a0a" stroke-width="2" fill="none" stroke-linejoin="round"/>
<path d="M1187 970.05L1205.2 970.05" stroke="#0a0a0a" stroke-width="1.4" fill="none" stroke-linecap="butt"/>
<path d="M1201.5 973.52L1201.5 925.8" stroke="#0a0a0a" stroke-width="1.3" fill="none" stroke-linecap="butt"/>
<ellipse cx="1196.4" cy="956.62" rx="5.9" ry="4.15" transform="rotate(-24 1196.4 956.62)" fill="#0a0a0a"/>
<ellipse cx="1196.4" cy="974.52" rx="5.9" ry="4.15" transform="rotate(-24 1196.4 974.52)" fill="#0a0a0a"/>
<path d="M1191.2 983.9L1201.6 987.4L1191.2 990.9" stroke="#0a0a0a" stroke-width="1.5" fill="none"/>
<path d="M1258.1 970.05L1276.3 970.05" stroke="#0a0a0a" stroke-width="1.4" fill="none" stroke-linecap="butt"/>
<path d="M1272.6 973.52L1272.6 925.8" stroke="#0a0a0a" stroke-width="1.3" fill="none" stroke-linecap="butt"/>
<ellipse cx="1267.5" cy="956.62" rx="5.9" ry="4.15" transform="rotate(-24 1267.5 956.62)" fill="#0a0a0a"/>
<ellipse cx="1267.5" cy="974.52" rx="5.9" ry="4.15" transform="rotate(-24 1267.5 974.52)" fill="#0a0a0a"/>
<path d="M1262.3 983.9L1272.7 987.4L1262.3 990.9" stroke="#0a0a0a" stroke-width="1.5" fill="none"/>
<path d="M-3.4 -13.2 L3.9 -5.4 Q0.6 -2.4 0.4 0.6 L4.3 7.2 Q0 5.6 -1.6 7.6 Q-2.6 10 0.4 13.2 Q-5.6 10.6 -5 7.4 Q-4.2 4.2 -0.2 4.8 L-3.6 -0.2 Q0.8 -4.6 -1.2 -8.2Z" transform="translate(1230.6 943.6)" fill="#0a0a0a" stroke="#0a0a0a" stroke-width="0.9" stroke-linejoin="round"/>
<path d="M-3.4 -13.2 L3.9 -5.4 Q0.6 -2.4 0.4 0.6 L4.3 7.2 Q0 5.6 -1.6 7.6 Q-2.6 10 0.4 13.2 Q-5.6 10.6 -5 7.4 Q-4.2 4.2 -0.2 4.8 L-3.6 -0.2 Q0.8 -4.6 -1.2 -8.2Z" transform="translate(1302.5 943.6)" fill="#0a0a0a" stroke="#0a0a0a" stroke-width="0.9" stroke-linejoin="round"/>
<path d="M1361.6 960.1L1361.6 913.8" stroke="#0a0a0a" stroke-width="1.3" fill="none" stroke-linecap="butt"/>
<ellipse cx="1356.5" cy="943.2" rx="5.9" ry="4.15" transform="rotate(-24 1356.5 943.2)" fill="#0a0a0a"/>
<ellipse cx="1356.5" cy="961.1" rx="5.9" ry="4.15" transform="rotate(-24 1356.5 961.1)" fill="#0a0a0a"/>
<path d="M1351.3 971.3L1361.7 974.8L1351.3 978.3" stroke="#0a0a0a" stroke-width="1.5" fill="none"/>
<path d="M1454.7 960.1L1454.7 913.8" stroke="#0a0a0a" stroke-width="1.3" fill="none" stroke-linecap="butt"/>
<ellipse cx="1449.6" cy="943.2" rx="5.9" ry="4.15" transform="rotate(-24 1449.6 943.2)" fill="#0a0a0a"/>
<ellipse cx="1449.6" cy="961.1" rx="5.9" ry="4.15" transform="rotate(-24 1449.6 961.1)" fill="#0a0a0a"/>
<path d="M1444.4 971.3L1454.8 974.8L1444.4 978.3" stroke="#0a0a0a" stroke-width="1.5" fill="none"/>
<path d="M-3.4 -13.2 L3.9 -5.4 Q0.6 -2.4 0.4 0.6 L4.3 7.2 Q0 5.6 -1.6 7.6 Q-2.6 10 0.4 13.2 Q-5.6 10.6 -5 7.4 Q-4.2 4.2 -0.2 4.8 L-3.6 -0.2 Q0.8 -4.6 -1.2 -8.2Z" transform="translate(1401.7 943.6)" fill="#0a0a0a" stroke="#0a0a0a" stroke-width="0.9" stroke-linejoin="round"/>
<path d="M-3.4 -13.2 L3.9 -5.4 Q0.6 -2.4 0.4 0.6 L4.3 7.2 Q0 5.6 -1.6 7.6 Q-2.6 10 0.4 13.2 Q-5.6 10.6 -5 7.4 Q-4.2 4.2 -0.2 4.8 L-3.6 -0.2 Q0.8 -4.6 -1.2 -8.2Z" transform="translate(1495.3 943.6)" fill="#0a0a0a" stroke="#0a0a0a" stroke-width="0.9" stroke-linejoin="round"/>
</svg>
<!-- TOOLBAR -->
<div id="toolbar" class="abs"></div>
<div id="tbleft" class="abs"></div>
<div id="ruler" class="abs"></div>
<div id="rulershadow" class="abs"></div>
<div id="rulerline" class="abs"></div>
<div class="tick" style="left:72px"></div>
<div class="tick" style="left:407px"></div>
<div class="tick" style="left:881px"></div>
<div class="tick" style="left:1172px"></div>
<div class="tick" style="left:1333px"></div>
<div class="mnum" style="left:240px">82</div>
<div class="mnum" style="left:644px">83</div>
<div class="mnum" style="left:1027px">84</div>
<div class="mnum" style="left:1253px">85</div>
<div class="mnum" style="left:1503px">86</div>
<svg id="tbicons" class="abs" style="left:0;top:0" width="1642" height="72" viewBox="0 0 1642 72">
<g fill="none" stroke="#8f8f93" stroke-width="1.7" stroke-linecap="butt" stroke-linejoin="miter">
<path d="M24.5 42.5 L36.1 30.6 L47.8 42.5" stroke="#a3a3a7" stroke-width="1.7"/>
<path d="M123.8 46.1 A11 11 0 1 0 111.4 34.5" stroke-width="1.8"/>
<path d="M107 33.2 L116 33.2 L111.4 38.6Z" fill="#8f8f93" stroke="none"/>
<path d="M194.4 46.1 A11 11 0 1 1 206.8 34.5" stroke="#4b4b51" stroke-width="1.8"/>
<path d="M202.4 33.2 L211.4 33.2 L206.9 38.6Z" fill="#4b4b51" stroke="none"/>
<!-- violin -->
<g stroke-width="1.4">
<path d="M293.8 22.4 L293.8 41.6" stroke-width="1.9"/>
<path d="M291.4 23 L296.2 23" stroke-width="1.6"/>
<path d="M292.2 30.2 C289.4 30.6 288.6 34.4 290.9 36.6 C288.2 38 287.6 41.6 288.3 44 C289.8 49.6 297.8 49.6 299.3 44 C300 41.6 299.4 38 296.7 36.6 C299 34.4 298.2 30.6 295.4 30.2"/>
<path d="M292.2 44.8 L295.4 44.8"/>
</g>
<!-- flat natural -->
<g stroke-width="2.4">
<path d="M362.8 22.5 L362.8 48.3"/>
<path d="M362.8 37.2 C366 33 370.2 34.2 370 37.4 C369.8 41.5 366 44.5 362.8 47.6" stroke-width="2.1"/>
<path d="M378 24 L378 42.6" stroke-width="2"/>
<path d="M381.6 29.6 L381.6 48.2" stroke-width="2"/>
<path d="M377 33 L382.6 30.6 M377 42.2 L382.6 39.8" stroke-width="3.4"/>
</g>
<!-- wave note -->
<path d="M462.9 24 L462.9 44.5" stroke-width="1.8"/>
<ellipse cx="458.8" cy="44.6" rx="4.6" ry="3.1" transform="rotate(-22 458.8 44.6)" fill="#8f8f93" stroke="none"/>
<path d="M437.5 30.2 C442 26.2 446 27.4 450 29.4 C454 31.4 458 31 462.5 27.4" stroke-width="1.6"/>
<path d="M437.5 35 C442 31 446 32.2 450 34.2 C454 36.2 458 35.8 462.5 32.2" stroke-width="1.6"/>
<!-- transport -->
<path d="M736.8 25.8 L736.8 45.9" stroke-width="2.2"/>
<path d="M744.6 35.8 L754.9 28.2 L754.9 43.4Z" stroke-width="2"/>
<path d="M809.8 20.8 L809.8 51.5 L831.3 35.9Z" stroke-width="2.6"/>
<path d="M887.1 28.2 L887.1 43.4 L897.6 35.8Z" stroke-width="2"/>
<path d="M905 25.8 L905 45.9" stroke-width="2.2"/>
<!-- dots -->
<circle cx="1035.1" cy="23.8" r="1.8" fill="#8f8f93" stroke="none"/>
<circle cx="1035.1" cy="34.4" r="2.6" fill="#8f8f93" stroke="none"/>
<circle cx="1035.1" cy="45.4" r="3.3" fill="#8f8f93" stroke="none"/>
<!-- printer -->
<g stroke-width="1.8">
<path d="M1168.8 33.6 L1168.8 23.4 L1179.6 23.4 L1179.6 33.6"/>
<path d="M1168.8 44.2 L1162.3 44.2 L1162.3 33.6 L1185.7 33.6 L1185.7 44.2 L1179.6 44.2"/>
<rect x="1168.8" y="39.8" width="10.8" height="7.6"/>
<rect x="1163.8" y="35.6" width="1.4" height="1.4" fill="#8f8f93" stroke="none"/>
</g>
<!-- share -->
<g stroke-width="1.6">
<circle cx="1258" cy="27.2" r="3.2"/>
<circle cx="1248.9" cy="42.9" r="3.2"/>
<circle cx="1267.1" cy="42.9" r="3.2"/>
<path d="M1254.8 28 A10.5 10.5 0 0 0 1247.6 39.9"/>
<path d="M1261.2 28 A10.5 10.5 0 0 1 1268.4 39.9"/>
<path d="M1251.6 45.4 A10.5 10.5 0 0 0 1264.4 45.4"/>
</g>
<!-- upload -->
<path d="M1333.4 22.9 L1348.4 22.9 M1340.9 26.6 L1340.9 48.4 M1333.6 34.2 L1340.9 26.8 L1348.2 34.2" stroke-width="1.7"/>
<!-- home -->
<path d="M1414.4 36.6 L1425.7 25.6 L1437.6 36.6" stroke-width="1.8"/>
<path d="M1417 34.6 L1417 46 L1422.8 46 L1422.8 38.4 L1428.8 38.4 L1428.8 46 L1434.8 46 L1434.8 34.6" stroke-width="1.8"/>
<!-- bulb -->
<path d="M1505.8 41.6 C1505.8 38.6 1500.6 36.6 1500.6 31.2 A8.7 8.7 0 0 1 1518 31.2 C1518 36.6 1512.8 38.6 1512.8 41.6 L1512.8 45.2 Q1512.8 47.4 1510.6 47.4 L1508 47.4 Q1505.8 47.4 1505.8 45.2Z M1505.8 43 L1512.8 43" stroke-width="1.7"/>
<!-- gear -->
<path d="M1606.47 33.52 L1606.47 37.08 L1603.33 37.54 L1602.19 40.32 L1604.08 42.87 L1601.57 45.38 L1599.02 43.49 L1596.24 44.63 L1595.78 47.77 L1592.22 47.77 L1591.76 44.63 L1588.98 43.49 L1586.43 45.38 L1583.92 42.87 L1585.81 40.32 L1584.67 37.54 L1581.53 37.08 L1581.53 33.52 L1584.67 33.06 L1585.81 30.28 L1583.92 27.73 L1586.43 25.22 L1588.98 27.11 L1591.76 25.97 L1592.22 22.83 L1595.78 22.83 L1596.24 25.97 L1599.02 27.11 L1601.57 25.22 L1604.08 27.73 L1602.19 30.28 L1603.33 33.06Z" stroke-width="1.6" stroke-linejoin="round"/>
<circle cx="1594" cy="35.3" r="3.7" stroke-width="1.6"/>
</g>
</svg>
<!-- DIALOG -->
<div id="dialog" class="abs"></div>
<div id="title"><span>Instruments</span></div>
<div class="lbl" style="left:274px;top:303px"><span style="transform:scaleX(.955)">Category</span></div>
<div class="lbl" style="left:615px;top:303px"><span style="transform:scaleX(.945)">Instrument</span></div>
<div class="lbl" style="left:1049px;top:303px"><span style="transform:scaleX(.935)">In your score</span></div>
<div class="list" style="left:275px;width:317px">
<div class="row"><span style="transform:translateX(-0.1px) scaleX(1.029)">Woodwind</span></div>
<div class="row"><span style="transform:translateX(-0.4px) scaleX(0.916)">Brass</span></div>
<div class="row sel"><span style="transform:translateX(-0.4px) scaleX(0.955)">Percussion</span></div>
<div class="row"><span style="transform:translateX(-1.1px) scaleX(0.998)">Strings</span></div>
<div class="row"><span style="transform:translateX(-0.1px) scaleX(0.963)">Voices</span></div>
<div class="row"><span style="transform:translateX(-0.5px) scaleX(0.994)">Keyed Instrument</span></div>
<div class="row"><span style="transform:translateX(-1.1px) scaleX(0.995)">Guitars</span></div>
</div>
<div class="list" style="left:616px;width:335px">
<div class="row sel"><span style="transform:translateX(0.5px) scaleX(1.015)">Timpani</span></div>
<div class="row"><span style="transform:translateX(-0.0px) scaleX(1.016)">Drum Kit</span></div>
<div class="row"><span style="transform:translateX(-0.5px) scaleX(1.017)">Xylophone</span></div>
<div class="row"><span style="transform:translateX(0.5px) scaleX(1.011)">Vibraphone</span></div>
<div class="row"><span style="transform:translateX(0.5px) scaleX(0.968)">Tubular Bells</span></div>
<div class="row"><span style="transform:translateX(0.5px) scaleX(1.004)">Tambourine</span></div>
<div class="row"><span style="transform:translateX(-0.0px) scaleX(1.037)">Piatti</span></div>
<div class="row"><span style="transform:translateX(-0.5px) scaleX(1.026)">Gong</span></div>
</div>
<div class="list" style="left:1051px;width:316px">
<div class="row sel"><span style="transform:translateX(-0.9px) scaleX(0.989)">Piano</span></div>
<div class="row"><span style="transform:translateX(-0.4px) scaleX(1.056)">Violin</span></div>
<div class="row"><span style="transform:translateX(-0.4px) scaleX(1.031)">Violin 2</span></div>
<div class="row"><span style="transform:translateX(-0.4px) scaleX(0.988)">Viola</span></div>
<div class="row"><span style="transform:translateX(-0.4px) scaleX(1.026)">Violoncello</span></div>
</div>
<div class="btnlbl" style="top:413px;color:#6e6e6e;transform:scaleX(1.07)">Move Up</div>
<div class="btnlbl" style="top:514px;transform:scaleX(1.03)">Add</div>
<div class="btnlbl" style="top:614.5px">Remove</div>
<div class="btnlbl" style="top:715.5px;transform:scaleX(1.04)">Move Down</div>
<svg id="dlgicons" class="abs" style="left:245px;top:206px" width="1152" height="635" viewBox="245 206 1152 635">
<g fill="none" stroke="#fff" stroke-width="1.6">
<path d="M989.8 386.6 L1001.1 375 L1012.4 386.6" stroke="#6c6c6c" stroke-width="1.4"/>
<path d="M995.6 470.8 L1006.8 481.8 L995.6 492.8"/>
<path d="M1006.3 571.4 L995.1 582.4 L1006.3 593.4"/>
<path d="M989.8 677.5 L1001.1 688.2 L1012.4 677.5"/>
<path d="M1212.2 786.2 L1238.8 812.8 M1238.8 786.2 L1212.2 812.8" stroke-width="2.3"/>
<path d="M1327.8 801.2 L1338.3 811.6 L1363.2 786.6" stroke-width="2.3"/>
</g>
</svg>
<!-- TASKBAR -->
<div id="taskbar" class="abs"></div>
<svg id="tkicons" class="abs" style="left:0;top:1046px" width="1642" height="48" viewBox="0 1046 1642 48">
<g fill="#fff" stroke="none">
<path d="M21.7 1062 L30.5 1060.8 L30.5 1069.3 L21.7 1069.3Z"/>
<path d="M31.6 1060.6 L46 1058.2 L46 1069.3 L31.6 1069.3Z"/>
<path d="M21.7 1070.4 L30.5 1070.4 L30.5 1079.7 L21.7 1078.5Z"/>
<path d="M31.6 1070.4 L46 1070.4 L46 1081.8 L31.6 1079.9Z"/>
</g>
<g fill="none" stroke="#fff" stroke-width="1.5">
<path d="M131.8 1069.8 L109 1069.8 M119.9 1059.2 L109 1069.8 L119.9 1080.6"/>
<circle cx="206.5" cy="1069.8" r="10.1" stroke-width="2.6"/>
<rect x="283.3" y="1059.8" width="18.6" height="20.6" rx="1.5"/>
<path d="M281 1063.6 L279 1063.6 L279 1076.4 L281 1076.4 M304.2 1063.6 L306.2 1063.6 L306.2 1076.4 L304.2 1076.4" stroke-width="1.3"/>
<!-- battery -->
<rect x="1384.7" y="1066.1" width="15.6" height="9.4" stroke-width="1.3"/>
<path d="M1401.3 1068.5 L1401.3 1073.2" stroke-width="1.3"/>
<rect x="1386.8" y="1068.2" width="5" height="5.2" fill="#fff" stroke="none"/>
<!-- wifi -->
<circle cx="1447" cy="1076.8" r="1.9" fill="#fff" stroke="none"/>
<path d="M1442 1077.5 A5.4 5.4 0 0 1 1448 1071.4" stroke-width="1.4"/>
<path d="M1438.3 1077.5 A9.2 9.2 0 0 1 1448.2 1067.7" stroke-width="1.4"/>
<path d="M1434.7 1077.5 A12.8 12.8 0 0 1 1448.4 1064.2" stroke-width="1.4"/>
<!-- speaker -->
<path d="M1479.6 1067.6 L1481.6 1067.6 L1485.4 1063.8 L1485.4 1076.8 L1481.6 1073.2 L1479.6 1073.2Z" stroke-width="1.3"/>
<path d="M1488.2 1067.2 A4.5 4.5 0 0 1 1488.2 1073.6" stroke-width="1.2"/>
<path d="M1490.8 1064.6 A8 8 0 0 1 1490.8 1076.2" stroke-width="1.2"/>
<path d="M1493.6 1062 A11.6 11.6 0 0 1 1493.6 1078.8" stroke-width="1.2" stroke="#777"/>
<!-- notification -->
<path d="M1536 1075.4 L1528 1075.4 L1528 1061.4 L1544.8 1061.4 L1544.8 1070" stroke-width="1.3"/>
<path d="M1531 1065 L1542 1065 M1531 1068.4 L1542 1068.4 M1531 1071.8 L1536 1071.8" stroke-width="1.1"/>
<circle cx="1540.4" cy="1074.6" r="4.3" fill="#000" stroke-width="1.2"/>
<path d="M1537.8 1074.6 L1543 1074.6" stroke-width="1.2"/>
</g>
</svg>
<div class="abs t" style="left:1575.5px;top:1049.5px;color:#fff;font-size:14.5px;line-height:20px;white-space:nowrap"><span id="tm" style="transform:scaleX(.95)">7:46 PM</span></div>
<div class="abs t" style="left:1568px;top:1070px;color:#fff;font-size:14.5px;line-height:20px;white-space:nowrap"><span id="dt" style="transform:scaleX(1.03)">11/9/2015</span></div>
</body>
</html>
